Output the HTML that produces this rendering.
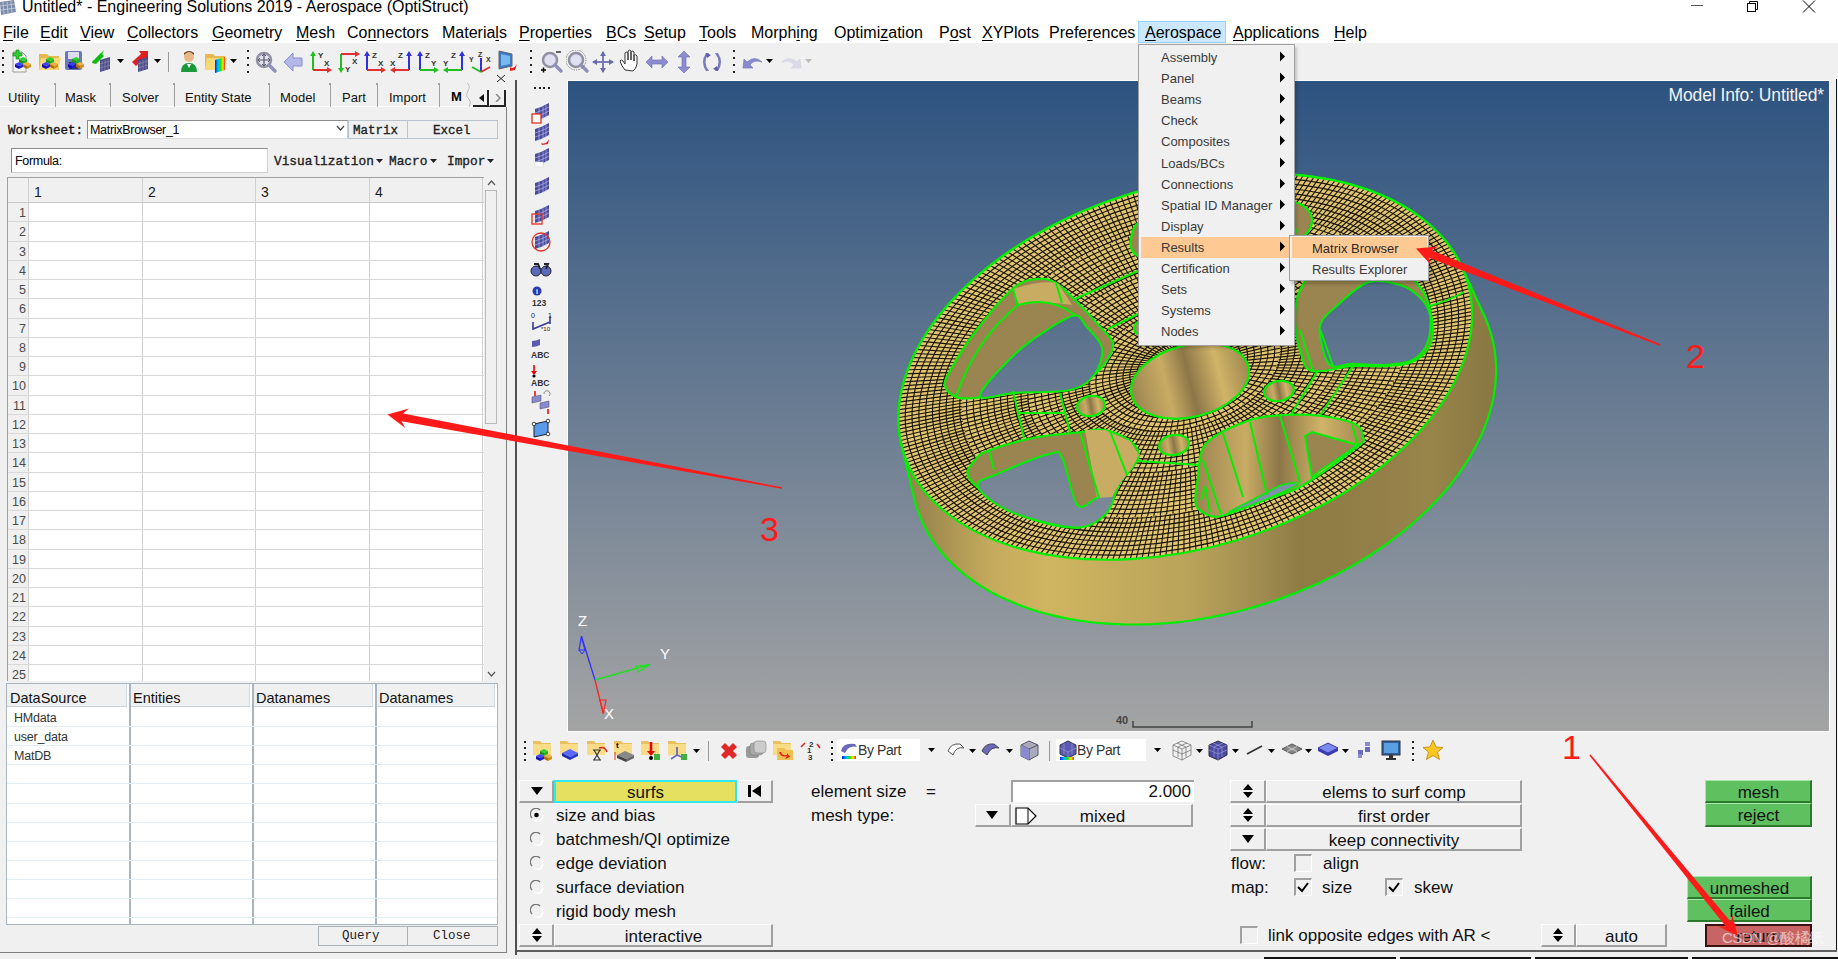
<!DOCTYPE html><html><head><meta charset="utf-8"><style>
*{margin:0;padding:0;box-sizing:border-box}
html,body{width:1838px;height:959px;overflow:hidden;background:#f0f0f0;font-family:"Liberation Sans",sans-serif;color:#000;position:relative}
.a{position:absolute}
.t{position:absolute;white-space:nowrap}
.mono{font-family:"Liberation Mono",monospace}
</style></head><body><div class="a" style="left:0;top:0;width:1838px;height:43px;background:#fff"></div>
<svg class="a" style="left:0;top:0" width="18" height="16"><path d="M0 2 L14 0 L16 12 L1 15 Z" fill="#7a8aa8"/><path d="M3 2 L4 14 M7 1.5 L8 13.5 M11 1 L12 13 M0.5 6 L15 4 M1 10 L15.5 8" stroke="#c8d0e0" stroke-width="0.8"/></svg>
<div class="t" style="left:22px;top:-3px;font-size:16px;line-height:20px;color:#000">Untitled* - Engineering Solutions 2019 - Aerospace (OptiStruct)</div>
<div class="a" style="left:1691px;top:5px;width:12px;height:1px;background:#555"></div>
<svg class="a" style="left:1745px;top:0" width="16" height="14"><rect x="2.5" y="3.5" width="8" height="8" fill="#fff" stroke="#000"/><path d="M4.5 3.5 V1.5 H12.5 V9.5 H10.5" fill="none" stroke="#000"/></svg>
<svg class="a" style="left:1801px;top:0" width="16" height="14"><path d="M2 0.5 L14 12.5 M14 0.5 L2 12.5" stroke="#000" stroke-width="1"/></svg>
<div class="a" style="left:1138px;top:21px;width:88px;height:22px;background:#cce8ff;border:1px solid #99d1ff"></div>
<div class="t" style="left:3px;top:23px;font-size:16px;line-height:20px"><u style="text-decoration:underline;text-underline-offset:2px">F</u>ile</div>
<div class="t" style="left:40px;top:23px;font-size:16px;line-height:20px"><u style="text-decoration:underline;text-underline-offset:2px">E</u>dit</div>
<div class="t" style="left:80px;top:23px;font-size:16px;line-height:20px"><u style="text-decoration:underline;text-underline-offset:2px">V</u>iew</div>
<div class="t" style="left:127px;top:23px;font-size:16px;line-height:20px"><u style="text-decoration:underline;text-underline-offset:2px">C</u>ollectors</div>
<div class="t" style="left:212px;top:23px;font-size:16px;line-height:20px"><u style="text-decoration:underline;text-underline-offset:2px">G</u>eometry</div>
<div class="t" style="left:296px;top:23px;font-size:16px;line-height:20px"><u style="text-decoration:underline;text-underline-offset:2px">M</u>esh</div>
<div class="t" style="left:347px;top:23px;font-size:16px;line-height:20px">Co<u style="text-decoration:underline;text-underline-offset:2px">n</u>nectors</div>
<div class="t" style="left:442px;top:23px;font-size:16px;line-height:20px">Materia<u style="text-decoration:underline;text-underline-offset:2px">l</u>s</div>
<div class="t" style="left:519px;top:23px;font-size:16px;line-height:20px"><u style="text-decoration:underline;text-underline-offset:2px">P</u>roperties</div>
<div class="t" style="left:606px;top:23px;font-size:16px;line-height:20px"><u style="text-decoration:underline;text-underline-offset:2px">B</u>Cs</div>
<div class="t" style="left:644px;top:23px;font-size:16px;line-height:20px"><u style="text-decoration:underline;text-underline-offset:2px">S</u>etup</div>
<div class="t" style="left:699px;top:23px;font-size:16px;line-height:20px"><u style="text-decoration:underline;text-underline-offset:2px">T</u>ools</div>
<div class="t" style="left:751px;top:23px;font-size:16px;line-height:20px">Morph<u style="text-decoration:underline;text-underline-offset:2px">i</u>ng</div>
<div class="t" style="left:834px;top:23px;font-size:16px;line-height:20px">Optimi<u style="text-decoration:underline;text-underline-offset:2px">z</u>ation</div>
<div class="t" style="left:939px;top:23px;font-size:16px;line-height:20px">P<u style="text-decoration:underline;text-underline-offset:2px">o</u>st</div>
<div class="t" style="left:982px;top:23px;font-size:16px;line-height:20px"><u style="text-decoration:underline;text-underline-offset:2px">X</u>YPlots</div>
<div class="t" style="left:1049px;top:23px;font-size:16px;line-height:20px">Prefe<u style="text-decoration:underline;text-underline-offset:2px">r</u>ences</div>
<div class="t" style="left:1145px;top:23px;font-size:16px;line-height:20px"><u style="text-decoration:underline;text-underline-offset:2px">A</u>erospace</div>
<div class="t" style="left:1233px;top:23px;font-size:16px;line-height:20px"><u style="text-decoration:underline;text-underline-offset:2px">A</u>pplications</div>
<div class="t" style="left:1334px;top:23px;font-size:16px;line-height:20px"><u style="text-decoration:underline;text-underline-offset:2px">H</u>elp</div>
<div class="a" style="left:2px;top:50px;width:2px;height:2px;background:#222"></div>
<div class="a" style="left:2px;top:57px;width:2px;height:2px;background:#222"></div>
<div class="a" style="left:2px;top:64px;width:2px;height:2px;background:#222"></div>
<div class="a" style="left:2px;top:71px;width:2px;height:2px;background:#222"></div>
<svg class="a" style="left:10px;top:48px" width="24" height="26" viewBox="0 0 24 26"><path d="M3 4 h9 l4 4 v16 h-13z" fill="#f4f4f4" stroke="#999"/><path d="M6 2 h3 v3 h3 v3 h-3 v3 h-3 v-3 h-3 v-3 h3z" fill="#3c3" stroke="#080" stroke-width=".6"/><path d="M9 11 l4-2 4 2 -4 2z" fill="#2fd02f"/><path d="M9 11 v3 l4 2 v-3z" fill="#1a901a"/><path d="M17 11 v3 l-4 2 v-3z" fill="#22b022"/><path d="M5 16 l4-2 4 2 -4 2z" fill="#4040ff"/><path d="M5 16 v3 l4 2 v-3z" fill="#1010b0"/><path d="M13 16 v3 l-4 2 v-3z" fill="#2020d0"/><path d="M13 16 l4-2 4 2 -4 2z" fill="#f0b040"/><path d="M13 16 v3 l4 2 v-3z" fill="#b07010"/><path d="M21 16 v3 l-4 2 v-3z" fill="#d09020"/></svg>
<svg class="a" style="left:37px;top:48px" width="26" height="26" viewBox="0 0 26 26"><path d="M2 6 h8 l2 2 h10 v14 h-20z" fill="#e8b850"/><path d="M4 10 h20 l-3 12 h-19z" fill="#f8d878"/><path d="M9 11 l4-2 4 2 -4 2z" fill="#2fd02f"/><path d="M9 11 v3 l4 2 v-3z" fill="#1a901a"/><path d="M17 11 v3 l-4 2 v-3z" fill="#22b022"/><path d="M5 16 l4-2 4 2 -4 2z" fill="#4040ff"/><path d="M5 16 v3 l4 2 v-3z" fill="#1010b0"/><path d="M13 16 v3 l-4 2 v-3z" fill="#2020d0"/><path d="M13 16 l4-2 4 2 -4 2z" fill="#f0b040"/><path d="M13 16 v3 l4 2 v-3z" fill="#b07010"/><path d="M21 16 v3 l-4 2 v-3z" fill="#d09020"/></svg>
<svg class="a" style="left:63px;top:48px" width="26" height="26" viewBox="0 0 26 26"><rect x="2" y="3" width="17" height="19" rx="2" fill="#6a78b8"/><rect x="5" y="4" width="11" height="7" fill="#dde"/><rect x="6" y="14" width="9" height="7" fill="#334"/><path d="M9 11 l4-2 4 2 -4 2z" fill="#2fd02f"/><path d="M9 11 v3 l4 2 v-3z" fill="#1a901a"/><path d="M17 11 v3 l-4 2 v-3z" fill="#22b022"/><path d="M5 16 l4-2 4 2 -4 2z" fill="#4040ff"/><path d="M5 16 v3 l4 2 v-3z" fill="#1010b0"/><path d="M13 16 v3 l-4 2 v-3z" fill="#2020d0"/><path d="M13 16 l4-2 4 2 -4 2z" fill="#f0b040"/><path d="M13 16 v3 l4 2 v-3z" fill="#b07010"/><path d="M21 16 v3 l-4 2 v-3z" fill="#d09020"/></svg>
<svg class="a" style="left:90px;top:48px" width="26" height="26" viewBox="0 0 26 26"><path d="M14 2 l-9 9 h4 v-1 l3-3z" fill="#2c2"/><path d="M3 13 l8-8 3 3 -8 8z" fill="#1b1"/><path d="M2 15 l4 1 -3-4z" fill="#1a1"/><path d="M10 12 l10-3 v12 l-10 3z" fill="#4a4a90"/><path d="M12 13 v10 M15 12 v10 M18 11 v10 M10 16 l10-3 M10 20 l10-3" stroke="#99a" stroke-width=".6"/></svg>
<svg class="a" style="left:117px;top:59px" width="7" height="4" viewBox="0 0 7 4"><path d="M0 0 H7 L3.5 4 Z" fill="#000"/></svg>
<svg class="a" style="left:128px;top:48px" width="26" height="26" viewBox="0 0 26 26"><path d="M4 14 l9-8 -2-3 h9 v9 l-3-2 -9 8z" fill="#e02020"/><path d="M10 12 l10-3 v12 l-10 3z" fill="#4a4a90"/><path d="M12 13 v10 M15 12 v10 M18 11 v10 M10 16 l10-3 M10 20 l10-3" stroke="#99a" stroke-width=".6"/></svg>
<svg class="a" style="left:154px;top:59px" width="7" height="4" viewBox="0 0 7 4"><path d="M0 0 H7 L3.5 4 Z" fill="#000"/></svg>
<div class="a" style="left:168px;top:52px;width:1px;height:20px;background:#999"></div>
<svg class="a" style="left:178px;top:48px" width="22" height="26" viewBox="0 0 22 26"><circle cx="11" cy="9" r="5" fill="#e8b888"/><path d="M6 7 q5-6 10 0 v-2 q-5-4 -10 0z" fill="#6b3a1a"/><path d="M3 24 q0-9 8-9 q8 0 8 9z" fill="#1a9a3a"/><path d="M9 16 l2 4 2-4z" fill="#fff"/></svg>
<svg class="a" style="left:203px;top:48px" width="26" height="26" viewBox="0 0 26 26"><path d="M2 6 h8 l2 2 h10 v14 h-20z" fill="#e8b850"/><path d="M4 10 h20 l-3 12 h-19z" fill="#f8d878"/><path d="M12 12 l10-3 v13 l-10 3z" fill="url(#rb)"/></svg>
<svg width="0" height="0" style="position:absolute"><defs><linearGradient id="rb" x1="0" x2="1"><stop offset="0" stop-color="#0020ff"/><stop offset=".3" stop-color="#00c0ff"/><stop offset=".55" stop-color="#20e020"/><stop offset=".8" stop-color="#ffe000"/><stop offset="1" stop-color="#ff2000"/></linearGradient></defs></svg>
<svg class="a" style="left:230px;top:59px" width="7" height="4" viewBox="0 0 7 4"><path d="M0 0 H7 L3.5 4 Z" fill="#000"/></svg>
<div class="a" style="left:247px;top:50px;width:2px;height:2px;background:#222"></div>
<div class="a" style="left:247px;top:57px;width:2px;height:2px;background:#222"></div>
<div class="a" style="left:247px;top:64px;width:2px;height:2px;background:#222"></div>
<div class="a" style="left:247px;top:71px;width:2px;height:2px;background:#222"></div>
<svg class="a" style="left:254px;top:50px" width="24" height="24" viewBox="0 0 24 24"><circle cx="10" cy="10" r="7" fill="#e0e0f0" stroke="#9090a0" stroke-width="2.5"/><path d="M15 15 l6 6" stroke="#9090b8" stroke-width="3.5" stroke-linecap="round"/><path d="M10 5 v10 M5 10 h10" stroke="#556" stroke-width="1.2"/><path d="M8 6 l2-2 2 2 M8 14 l2 2 2-2 M6 8 l-2 2 2 2 M14 8 l2 2 -2 2" fill="none" stroke="#556" stroke-width="1"/></svg>
<svg class="a" style="left:281px;top:50px" width="24" height="24" viewBox="0 0 24 24"><path d="M3 12 l9-9 v5 h9 v8 h-9 v5z" fill="#b4b8e8" stroke="#8a8ed0"/></svg>
<svg class="a" style="left:309px;top:50px" width="24" height="24" viewBox="0 0 24 24"><path d="M4 20 V4" stroke="#20c020" stroke-width="2"/><path d="M1 6 L4 1 L7 6z" fill="#20c020"/><path d="M4 20 H20" stroke="#e03030" stroke-width="2"/><path d="M18 17 L23 20 L18 23z" fill="#e03030"/><text x="9" y="8" font-size="8" font-weight="bold" fill="#333" font-family="Liberation Sans">Y</text><text x="15" y="16" font-size="8" font-weight="bold" fill="#333" font-family="Liberation Sans">X</text></svg>
<svg class="a" style="left:337px;top:50px" width="24" height="24" viewBox="0 0 24 24"><path d="M4 4 V20" stroke="#20c020" stroke-width="2"/><path d="M1 18 L4 23 L7 18z" fill="#20c020"/><path d="M4 4 H20" stroke="#e03030" stroke-width="2"/><path d="M18 1 L23 4 L18 7z" fill="#e03030"/><text x="15" y="14" font-size="8" font-weight="bold" fill="#333" font-family="Liberation Sans">X</text><text x="8" y="22" font-size="8" font-weight="bold" fill="#333" font-family="Liberation Sans">Y</text></svg>
<svg class="a" style="left:363px;top:50px" width="24" height="24" viewBox="0 0 24 24"><path d="M4 20 V4" stroke="#3030e0" stroke-width="2"/><path d="M1 6 L4 1 L7 6z" fill="#3030e0"/><path d="M4 20 H20" stroke="#e03030" stroke-width="2"/><path d="M18 17 L23 20 L18 23z" fill="#e03030"/><text x="9" y="8" font-size="8" font-weight="bold" fill="#333" font-family="Liberation Sans">Z</text><text x="15" y="16" font-size="8" font-weight="bold" fill="#333" font-family="Liberation Sans">X</text></svg>
<svg class="a" style="left:389px;top:50px;transform:scaleX(-1)" width="24" height="24"><path d="M4 20 V4" stroke="#3030e0" stroke-width="2"/><path d="M1 6 L4 1 L7 6z" fill="#3030e0"/><path d="M4 20 H20" stroke="#e03030" stroke-width="2"/><path d="M18 17 L23 20 L18 23z" fill="#e03030"/><text x="9" y="8" font-size="8" font-weight="bold" fill="#333" font-family="Liberation Sans"></text><text x="15" y="16" font-size="8" font-weight="bold" fill="#333" font-family="Liberation Sans"></text></svg>
<svg class="a" style="left:389px;top:50px" width="24" height="24" viewBox="0 0 24 24"><text x="1" y="16" font-size="8" font-weight="bold" fill="#333" font-family="Liberation Sans">X</text><text x="9" y="8" font-size="8" font-weight="bold" fill="#333" font-family="Liberation Sans">Z</text></svg>
<svg class="a" style="left:416px;top:50px" width="24" height="24" viewBox="0 0 24 24"><path d="M4 20 V4" stroke="#3030e0" stroke-width="2"/><path d="M1 6 L4 1 L7 6z" fill="#3030e0"/><path d="M4 20 H20" stroke="#20c020" stroke-width="2"/><path d="M18 17 L23 20 L18 23z" fill="#20c020"/><text x="9" y="8" font-size="8" font-weight="bold" fill="#333" font-family="Liberation Sans">Z</text><text x="15" y="16" font-size="8" font-weight="bold" fill="#333" font-family="Liberation Sans">Y</text></svg>
<svg class="a" style="left:442px;top:50px;transform:scaleX(-1)" width="24" height="24"><path d="M4 20 V4" stroke="#3030e0" stroke-width="2"/><path d="M1 6 L4 1 L7 6z" fill="#3030e0"/><path d="M4 20 H20" stroke="#20c020" stroke-width="2"/><path d="M18 17 L23 20 L18 23z" fill="#20c020"/><text x="9" y="8" font-size="8" font-weight="bold" fill="#333" font-family="Liberation Sans"></text><text x="15" y="16" font-size="8" font-weight="bold" fill="#333" font-family="Liberation Sans"></text></svg>
<svg class="a" style="left:442px;top:50px" width="24" height="24" viewBox="0 0 24 24"><text x="1" y="16" font-size="8" font-weight="bold" fill="#333" font-family="Liberation Sans">Y</text><text x="9" y="8" font-size="8" font-weight="bold" fill="#333" font-family="Liberation Sans">Z</text></svg>
<svg class="a" style="left:469px;top:50px" width="24" height="24" viewBox="0 0 24 24"><path d="M12 22 V8" stroke="#3030e0" stroke-width="2"/><path d="M12 22 L3 17" stroke="#20c020" stroke-width="2"/><path d="M12 22 L21 17" stroke="#e03030" stroke-width="2"/><text x="9" y="7" font-size="7" font-weight="bold" fill="#333">Z</text><text x="0" y="12" font-size="7" font-weight="bold" fill="#333">Y</text><text x="17" y="12" font-size="7" font-weight="bold" fill="#333">X</text></svg>
<svg class="a" style="left:496px;top:48px" width="24" height="26" viewBox="0 0 24 26"><path d="M3 3 l13 3 v12 l-13 3z" fill="#3a7ac8" stroke="#666"/><path d="M5 6 l9 2 v8 l-9 2z" fill="#7ab8f0"/><path d="M14 19 q3 3 7-3 l-2 6 -5 1z" fill="#e02020"/></svg>
<div class="a" style="left:530px;top:50px;width:2px;height:2px;background:#222"></div>
<div class="a" style="left:530px;top:57px;width:2px;height:2px;background:#222"></div>
<div class="a" style="left:530px;top:64px;width:2px;height:2px;background:#222"></div>
<div class="a" style="left:530px;top:71px;width:2px;height:2px;background:#222"></div>
<svg class="a" style="left:540px;top:50px" width="24" height="24" viewBox="0 0 24 24"><circle cx="10" cy="10" r="7" fill="#e0e0f0" stroke="#9090a0" stroke-width="2.5"/><path d="M15 15 l6 6" stroke="#9090b8" stroke-width="3.5" stroke-linecap="round"/><path d="M16 2 h5" stroke="#333" stroke-width="1.5"/><path d="M1 20 h5 M3.5 17.5 v5" stroke="#000" stroke-width="1.5"/></svg>
<svg class="a" style="left:566px;top:50px" width="24" height="24" viewBox="0 0 24 24"><circle cx="10" cy="10" r="7" fill="#e0e0f0" stroke="#9090a0" stroke-width="2.5"/><path d="M15 15 l6 6" stroke="#9090b8" stroke-width="3.5" stroke-linecap="round"/><circle cx="10" cy="10" r="10" fill="none" stroke="#555" stroke-dasharray="1.2 1.2" stroke-width=".8"/></svg>
<svg class="a" style="left:591px;top:50px" width="24" height="24" viewBox="0 0 24 24"><path d="M12 2 V22 M2 12 H22" stroke="#7a7ab8" stroke-width="2"/><path d="M12 1 l-3 5 h6z M12 23 l-3-5 h6z M1 12 l5-3 v6z M23 12 l-5-3 v6z" fill="#6a6aa8"/></svg>
<svg class="a" style="left:619px;top:49px" width="24" height="24" viewBox="0 0 24 24"><path d="M6 21 q-4-5 -5-9 q1-2 3 0 l2 3 V4 q2-2 3 0 V11 V2 q2-2 3 0 V11 V3 q2-2 3 0 V12 V6 q2-1 3 1 V15 q-1 5 -4 7z" fill="#fff" stroke="#333" stroke-width="1"/></svg>
<svg class="a" style="left:645px;top:50px" width="24" height="24" viewBox="0 0 24 24"><path d="M1 12 l6-6 v4 h10 v-4 l6 6 -6 6 v-4 h-10 v4z" fill="#8c8cd0" stroke="#6a6ab0" stroke-width=".6"/></svg>
<svg class="a" style="left:672px;top:50px" width="24" height="24" viewBox="0 0 24 24"><path d="M12 1 l6 6 h-4 v10 h4 l-6 6 -6-6 h4 v-10 h-4z" fill="#8c8cd0" stroke="#6a6ab0" stroke-width=".6"/></svg>
<svg class="a" style="left:700px;top:50px" width="24" height="24" viewBox="0 0 24 24"><path d="M9 3 q-7 9 0 18 l-3 0 q-6-9 0-18z" fill="#7a7ac0"/><path d="M15 3 q7 9 0 18 l3 0 q6-9 0-18z" fill="#7a7ac0"/><path d="M6 3 l5 2 -4 3z M18 21 l-5-2 4-3z" fill="#5a5aa0"/></svg>
<div class="a" style="left:733px;top:50px;width:2px;height:2px;background:#222"></div>
<div class="a" style="left:733px;top:57px;width:2px;height:2px;background:#222"></div>
<div class="a" style="left:733px;top:64px;width:2px;height:2px;background:#222"></div>
<div class="a" style="left:733px;top:71px;width:2px;height:2px;background:#222"></div>
<svg class="a" style="left:740px;top:50px" width="24" height="24" viewBox="0 0 24 24"><path d="M3 18 l1-9 3 3 q8-7 15 0 q-8-3 -12 3 l3 3z" fill="#8a8ad0" stroke="#6a6ab0" stroke-width=".6"/></svg>
<svg class="a" style="left:766px;top:59px" width="7" height="4" viewBox="0 0 7 4"><path d="M0 0 H7 L3.5 4 Z" fill="#000"/></svg>
<svg class="a" style="left:780px;top:50px" width="24" height="24" viewBox="0 0 24 24"><g transform="translate(24,0) scale(-1,1)"><path d="M3 18 l1-9 3 3 q8-7 15 0 q-8-3 -12 3 l3 3z" fill="#dcdce8" stroke="#d0d0e0" stroke-width=".6"/></g></svg>
<svg class="a" style="left:805px;top:59px" width="7" height="4" viewBox="0 0 7 4"><path d="M0 0 H7 L3.5 4 Z" fill="#bbb"/></svg>
<div class="a" style="left:0;top:106px;width:506px;height:1px;background:#fff"></div>
<div class="t" style="left:8px;top:90px;font-size:13px;line-height:16px;color:#111">Utility</div>
<div class="a" style="left:55px;top:83px;width:1px;height:24px;background:#a0a0a0"></div>
<div class="a" style="left:54px;top:83px;width:1px;height:2px;background:#a0a0a0"></div>
<div class="t" style="left:65px;top:90px;font-size:13px;line-height:16px;color:#111">Mask</div>
<div class="a" style="left:110px;top:83px;width:1px;height:24px;background:#a0a0a0"></div>
<div class="a" style="left:109px;top:83px;width:1px;height:2px;background:#a0a0a0"></div>
<div class="t" style="left:122px;top:90px;font-size:13px;line-height:16px;color:#111">Solver</div>
<div class="a" style="left:174px;top:83px;width:1px;height:24px;background:#a0a0a0"></div>
<div class="a" style="left:173px;top:83px;width:1px;height:2px;background:#a0a0a0"></div>
<div class="t" style="left:185px;top:90px;font-size:13px;line-height:16px;color:#111">Entity State</div>
<div class="a" style="left:269px;top:83px;width:1px;height:24px;background:#a0a0a0"></div>
<div class="a" style="left:268px;top:83px;width:1px;height:2px;background:#a0a0a0"></div>
<div class="t" style="left:280px;top:90px;font-size:13px;line-height:16px;color:#111">Model</div>
<div class="a" style="left:330px;top:83px;width:1px;height:24px;background:#a0a0a0"></div>
<div class="a" style="left:329px;top:83px;width:1px;height:2px;background:#a0a0a0"></div>
<div class="t" style="left:342px;top:90px;font-size:13px;line-height:16px;color:#111">Part</div>
<div class="a" style="left:377px;top:83px;width:1px;height:24px;background:#a0a0a0"></div>
<div class="a" style="left:376px;top:83px;width:1px;height:2px;background:#a0a0a0"></div>
<div class="t" style="left:389px;top:90px;font-size:13px;line-height:16px;color:#111">Import</div>
<div class="a" style="left:439px;top:83px;width:1px;height:24px;background:#a0a0a0"></div>
<div class="a" style="left:438px;top:83px;width:1px;height:2px;background:#a0a0a0"></div>
<div class="t" style="left:451px;top:89px;font-size:13px;line-height:16px;font-weight:bold">M</div>
<svg class="a" style="left:465px;top:82px" width="8" height="26" viewBox="0 0 8 26"><path d="M2 1 q4 3 1 8 q-3 5 1 8 q3 3 0 8" fill="none" stroke="#bbb"/></svg>
<div class="a" style="left:473px;top:90px;width:16px;height:17px;border-right:2px solid #222;border-bottom:2px solid #222;background:#f0f0f0"></div>
<div class="a" style="left:489px;top:90px;width:17px;height:17px;border-right:2px solid #222;border-bottom:2px solid #222;border-left:1px solid #fff;background:#f0f0f0"></div>
<svg class="a" style="left:479px;top:94px" width="6" height="8" viewBox="0 0 6 8"><path d="M5 0 V8 L0 4z" fill="#111"/></svg>
<svg class="a" style="left:495px;top:94px" width="6" height="8" viewBox="0 0 6 8"><path d="M1 0 L5 4 L1 8" fill="none" stroke="#888" stroke-width="1.5"/></svg>
<svg class="a" style="left:496px;top:74px" width="10" height="9" viewBox="0 0 10 9"><path d="M1 1 L9 8 M9 1 L1 8" stroke="#222" stroke-width="1"/></svg>
<div class="a" style="left:506px;top:107px;width:1px;height:846px;background:#808080"></div>
<div class="a" style="left:0px;top:952px;width:507px;height:1px;background:#808080"></div>
<div class="a" style="left:515px;top:80px;width:2px;height:875px;background:#505050"></div>
<div class="t mono" style="left:8px;top:122.5px;font-size:12.5px;line-height:16px;-webkit-text-stroke:0.35px #111;color:#111">Worksheet:</div>
<div class="a" style="left:87px;top:120px;width:261px;height:19px;background:#fff;border:1px solid #8c8c8c;border-right:1px solid #ccc;border-bottom:1px solid #ddd"></div>
<div class="t" style="left:90px;top:122px;font-size:12.5px;line-height:16px;letter-spacing:-0.3px">MatrixBrowser_1</div>
<svg class="a" style="left:336px;top:125px" width="9" height="7" viewBox="0 0 9 7"><path d="M1 1 L4.5 5 L8 1" fill="none" stroke="#444" stroke-width="1.2"/></svg>
<div class="a" style="left:348px;top:120px;width:60px;height:19px;background:#f0f0f0;border:1px solid #b8c4d0"></div>
<div class="a" style="left:407px;top:120px;width:91px;height:19px;background:#f0f0f0;border:1px solid #b8c4d0"></div>
<div class="t mono" style="left:353px;top:122.5px;font-size:12.5px;line-height:16px;-webkit-text-stroke:0.35px #222;color:#222">Matrix</div>
<div class="t mono" style="left:433px;top:122.5px;font-size:12.5px;line-height:16px;-webkit-text-stroke:0.35px #222;color:#222">Excel</div>
<div class="a" style="left:11px;top:148px;width:257px;height:25px;background:#fff;border:1px solid #8c8c8c;border-right-color:#d0d0d0;border-bottom-color:#d0d0d0"></div>
<div class="t" style="left:15px;top:153px;font-size:12.5px;line-height:16px;letter-spacing:-0.3px">Formula:</div>
<div class="t mono" style="left:274px;top:153.5px;font-size:12.8px;line-height:16px;-webkit-text-stroke:0.35px #222;color:#222">Visualization</div>
<div class="t mono" style="left:389px;top:153.5px;font-size:12.8px;line-height:16px;-webkit-text-stroke:0.35px #222;color:#222">Macro</div>
<div class="t mono" style="left:447px;top:153.5px;font-size:12.8px;line-height:16px;-webkit-text-stroke:0.35px #222;color:#222">Impor</div>
<svg class="a" style="left:376px;top:159px" width="7" height="4" viewBox="0 0 7 4"><path d="M0 0 H7 L3.5 4 Z" fill="#222"/></svg>
<svg class="a" style="left:430px;top:159px" width="7" height="4" viewBox="0 0 7 4"><path d="M0 0 H7 L3.5 4 Z" fill="#222"/></svg>
<svg class="a" style="left:487px;top:159px" width="7" height="4" viewBox="0 0 7 4"><path d="M0 0 H7 L3.5 4 Z" fill="#222"/></svg>
<div class="a" style="left:7px;top:177px;width:477px;height:504px;background:#fff;border-top:1px solid #a0a0a0;border-left:1px solid #a0a0a0"></div>
<div class="a" style="left:8px;top:178px;width:476px;height:24px;background:#f0f0f0"></div>
<div class="a" style="left:8px;top:202px;width:20px;height:479px;background:#f0f0f0"></div>
<div class="a" style="left:28px;top:178px;width:1px;height:503px;background:#d0d0d0"></div>
<div class="a" style="left:142px;top:178px;width:1px;height:503px;background:#d0d0d0"></div>
<div class="a" style="left:255px;top:178px;width:1px;height:503px;background:#d0d0d0"></div>
<div class="a" style="left:369px;top:178px;width:1px;height:503px;background:#d0d0d0"></div>
<div class="a" style="left:482px;top:178px;width:1px;height:503px;background:#d0d0d0"></div>
<div class="a" style="left:8px;top:202px;width:476px;height:1px;background:#c8c8c8"></div>
<div class="t" style="left:34px;top:184px;font-size:14px;line-height:16px;color:#1a1a1a">1</div>
<div class="t" style="left:148px;top:184px;font-size:14px;line-height:16px;color:#1a1a1a">2</div>
<div class="t" style="left:261px;top:184px;font-size:14px;line-height:16px;color:#1a1a1a">3</div>
<div class="t" style="left:375px;top:184px;font-size:14px;line-height:16px;color:#1a1a1a">4</div>
<div class="a" style="left:8px;top:221.25px;width:476px;height:1px;background:#d8d8d8"></div>
<div class="t" style="left:8px;width:18px;text-align:right;top:206.00px;font-size:12.5px;line-height:14px;color:#4a4a4a">1</div>
<div class="a" style="left:8px;top:240.50px;width:476px;height:1px;background:#d8d8d8"></div>
<div class="t" style="left:8px;width:18px;text-align:right;top:225.25px;font-size:12.5px;line-height:14px;color:#4a4a4a">2</div>
<div class="a" style="left:8px;top:259.75px;width:476px;height:1px;background:#d8d8d8"></div>
<div class="t" style="left:8px;width:18px;text-align:right;top:244.50px;font-size:12.5px;line-height:14px;color:#4a4a4a">3</div>
<div class="a" style="left:8px;top:279.00px;width:476px;height:1px;background:#d8d8d8"></div>
<div class="t" style="left:8px;width:18px;text-align:right;top:263.75px;font-size:12.5px;line-height:14px;color:#4a4a4a">4</div>
<div class="a" style="left:8px;top:298.25px;width:476px;height:1px;background:#d8d8d8"></div>
<div class="t" style="left:8px;width:18px;text-align:right;top:283.00px;font-size:12.5px;line-height:14px;color:#4a4a4a">5</div>
<div class="a" style="left:8px;top:317.50px;width:476px;height:1px;background:#d8d8d8"></div>
<div class="t" style="left:8px;width:18px;text-align:right;top:302.25px;font-size:12.5px;line-height:14px;color:#4a4a4a">6</div>
<div class="a" style="left:8px;top:336.75px;width:476px;height:1px;background:#d8d8d8"></div>
<div class="t" style="left:8px;width:18px;text-align:right;top:321.50px;font-size:12.5px;line-height:14px;color:#4a4a4a">7</div>
<div class="a" style="left:8px;top:356.00px;width:476px;height:1px;background:#d8d8d8"></div>
<div class="t" style="left:8px;width:18px;text-align:right;top:340.75px;font-size:12.5px;line-height:14px;color:#4a4a4a">8</div>
<div class="a" style="left:8px;top:375.25px;width:476px;height:1px;background:#d8d8d8"></div>
<div class="t" style="left:8px;width:18px;text-align:right;top:360.00px;font-size:12.5px;line-height:14px;color:#4a4a4a">9</div>
<div class="a" style="left:8px;top:394.50px;width:476px;height:1px;background:#d8d8d8"></div>
<div class="t" style="left:8px;width:18px;text-align:right;top:379.25px;font-size:12.5px;line-height:14px;color:#4a4a4a">10</div>
<div class="a" style="left:8px;top:413.75px;width:476px;height:1px;background:#d8d8d8"></div>
<div class="t" style="left:8px;width:18px;text-align:right;top:398.50px;font-size:12.5px;line-height:14px;color:#4a4a4a">11</div>
<div class="a" style="left:8px;top:433.00px;width:476px;height:1px;background:#d8d8d8"></div>
<div class="t" style="left:8px;width:18px;text-align:right;top:417.75px;font-size:12.5px;line-height:14px;color:#4a4a4a">12</div>
<div class="a" style="left:8px;top:452.25px;width:476px;height:1px;background:#d8d8d8"></div>
<div class="t" style="left:8px;width:18px;text-align:right;top:437.00px;font-size:12.5px;line-height:14px;color:#4a4a4a">13</div>
<div class="a" style="left:8px;top:471.50px;width:476px;height:1px;background:#d8d8d8"></div>
<div class="t" style="left:8px;width:18px;text-align:right;top:456.25px;font-size:12.5px;line-height:14px;color:#4a4a4a">14</div>
<div class="a" style="left:8px;top:490.75px;width:476px;height:1px;background:#d8d8d8"></div>
<div class="t" style="left:8px;width:18px;text-align:right;top:475.50px;font-size:12.5px;line-height:14px;color:#4a4a4a">15</div>
<div class="a" style="left:8px;top:510.00px;width:476px;height:1px;background:#d8d8d8"></div>
<div class="t" style="left:8px;width:18px;text-align:right;top:494.75px;font-size:12.5px;line-height:14px;color:#4a4a4a">16</div>
<div class="a" style="left:8px;top:529.25px;width:476px;height:1px;background:#d8d8d8"></div>
<div class="t" style="left:8px;width:18px;text-align:right;top:514.00px;font-size:12.5px;line-height:14px;color:#4a4a4a">17</div>
<div class="a" style="left:8px;top:548.50px;width:476px;height:1px;background:#d8d8d8"></div>
<div class="t" style="left:8px;width:18px;text-align:right;top:533.25px;font-size:12.5px;line-height:14px;color:#4a4a4a">18</div>
<div class="a" style="left:8px;top:567.75px;width:476px;height:1px;background:#d8d8d8"></div>
<div class="t" style="left:8px;width:18px;text-align:right;top:552.50px;font-size:12.5px;line-height:14px;color:#4a4a4a">19</div>
<div class="a" style="left:8px;top:587.00px;width:476px;height:1px;background:#d8d8d8"></div>
<div class="t" style="left:8px;width:18px;text-align:right;top:571.75px;font-size:12.5px;line-height:14px;color:#4a4a4a">20</div>
<div class="a" style="left:8px;top:606.25px;width:476px;height:1px;background:#d8d8d8"></div>
<div class="t" style="left:8px;width:18px;text-align:right;top:591.00px;font-size:12.5px;line-height:14px;color:#4a4a4a">21</div>
<div class="a" style="left:8px;top:625.50px;width:476px;height:1px;background:#d8d8d8"></div>
<div class="t" style="left:8px;width:18px;text-align:right;top:610.25px;font-size:12.5px;line-height:14px;color:#4a4a4a">22</div>
<div class="a" style="left:8px;top:644.75px;width:476px;height:1px;background:#d8d8d8"></div>
<div class="t" style="left:8px;width:18px;text-align:right;top:629.50px;font-size:12.5px;line-height:14px;color:#4a4a4a">23</div>
<div class="a" style="left:8px;top:664.00px;width:476px;height:1px;background:#d8d8d8"></div>
<div class="t" style="left:8px;width:18px;text-align:right;top:648.75px;font-size:12.5px;line-height:14px;color:#4a4a4a">24</div>
<div class="a" style="left:8px;top:683.25px;width:476px;height:1px;background:#d8d8d8"></div>
<div class="t" style="left:8px;width:18px;text-align:right;top:668.00px;font-size:12.5px;line-height:14px;color:#4a4a4a">25</div>
<div class="a" style="left:484px;top:177px;width:14px;height:504px;background:#f0f0f0"></div>
<div class="a" style="left:485px;top:190px;width:12px;height:234px;border:1px solid #b8b8b8;background:#f0f0f0"></div>
<svg class="a" style="left:487px;top:180px" width="9" height="6" viewBox="0 0 9 6"><path d="M1 5 L4.5 1 L8 5" fill="none" stroke="#555" stroke-width="1.2"/></svg>
<svg class="a" style="left:487px;top:671px" width="9" height="6" viewBox="0 0 9 6"><path d="M1 1 L4.5 5 L8 1" fill="none" stroke="#555" stroke-width="1.2"/></svg>
<div class="a" style="left:6px;top:683px;width:492px;height:242px;background:#fff;border:1px solid #a8b4c0"></div>
<div class="a" style="left:7px;top:684px;width:120px;height:23px;background:#f0f0f0;border-bottom:1px solid #c8d0d8;border-right:1px solid #d0d8e0"></div>
<div class="t" style="left:10px;top:689.5px;font-size:14.5px;line-height:17px;color:#111">DataSource</div>
<div class="a" style="left:130px;top:684px;width:120px;height:23px;background:#f0f0f0;border-bottom:1px solid #c8d0d8;border-right:1px solid #d0d8e0"></div>
<div class="t" style="left:133px;top:689.5px;font-size:14.5px;line-height:17px;color:#111">Entities</div>
<div class="a" style="left:253px;top:684px;width:120px;height:23px;background:#f0f0f0;border-bottom:1px solid #c8d0d8;border-right:1px solid #d0d8e0"></div>
<div class="t" style="left:256px;top:689.5px;font-size:14.5px;line-height:17px;color:#111">Datanames</div>
<div class="a" style="left:376px;top:684px;width:119px;height:23px;background:#f0f0f0;border-bottom:1px solid #c8d0d8;border-right:1px solid #d0d8e0"></div>
<div class="t" style="left:379px;top:689.5px;font-size:14.5px;line-height:17px;color:#111">Datanames</div>
<div class="a" style="left:129px;top:683px;width:2px;height:242px;background:#a8b4c0"></div>
<div class="a" style="left:252px;top:683px;width:2px;height:242px;background:#a8b4c0"></div>
<div class="a" style="left:375px;top:683px;width:2px;height:242px;background:#a8b4c0"></div>
<div class="a" style="left:7px;top:726.1px;width:490px;height:1px;background:#e2eef6"></div>
<div class="a" style="left:7px;top:745.2px;width:490px;height:1px;background:#e2eef6"></div>
<div class="a" style="left:7px;top:764.3px;width:490px;height:1px;background:#e2eef6"></div>
<div class="a" style="left:7px;top:783.4px;width:490px;height:1px;background:#e2eef6"></div>
<div class="a" style="left:7px;top:802.5px;width:490px;height:1px;background:#e2eef6"></div>
<div class="a" style="left:7px;top:821.6px;width:490px;height:1px;background:#e2eef6"></div>
<div class="a" style="left:7px;top:840.7px;width:490px;height:1px;background:#e2eef6"></div>
<div class="a" style="left:7px;top:859.8px;width:490px;height:1px;background:#e2eef6"></div>
<div class="a" style="left:7px;top:878.9px;width:490px;height:1px;background:#e2eef6"></div>
<div class="a" style="left:7px;top:898.0px;width:490px;height:1px;background:#e2eef6"></div>
<div class="a" style="left:7px;top:917.1px;width:490px;height:1px;background:#e2eef6"></div>
<div class="t" style="left:14px;top:711.0px;font-size:12.5px;line-height:14px;color:#333;letter-spacing:-0.2px">HMdata</div>
<div class="t" style="left:14px;top:730.1px;font-size:12.5px;line-height:14px;color:#333;letter-spacing:-0.2px">user_data</div>
<div class="t" style="left:14px;top:749.2px;font-size:12.5px;line-height:14px;color:#333;letter-spacing:-0.2px">MatDB</div>
<div class="a" style="left:318px;top:926px;width:90px;height:20px;background:#f0f0f0;border:1px solid #a8b0b8"></div>
<div class="a" style="left:407px;top:926px;width:91px;height:20px;background:#f0f0f0;border:1px solid #a8b0b8"></div>
<div class="t mono" style="left:342px;top:928px;font-size:12.5px;line-height:16px;color:#222">Query</div>
<div class="t mono" style="left:433px;top:928px;font-size:12.5px;line-height:16px;color:#222">Close</div>
<div class="a" style="left:567px;top:80px;width:1263px;height:652px;background:#fff"></div>
<div class="a" style="left:1836px;top:79px;width:1px;height:873px;background:#181818"></div>
<svg class="a" style="left:568px;top:81px" width="1261" height="650" viewBox="568 81 1261 650"><defs>
<linearGradient id="bg" gradientUnits="userSpaceOnUse" x1="0" y1="81" x2="0" y2="731"><stop offset="0" stop-color="#2d5380"/><stop offset="1" stop-color="#a4a4a4"/></linearGradient>
<linearGradient id="wall" gradientUnits="userSpaceOnUse" x1="900" y1="0" x2="1500" y2="0">
<stop offset="0" stop-color="#948050"/><stop offset=".053" stop-color="#a08c50"/><stop offset=".15" stop-color="#c4aa5c"/><stop offset=".25" stop-color="#cfb560"/><stop offset=".483" stop-color="#b9a35a"/><stop offset=".6" stop-color="#a08c50"/><stop offset=".667" stop-color="#8d7c44"/><stop offset=".8" stop-color="#947f48"/><stop offset=".883" stop-color="#97854a"/><stop offset=".97" stop-color="#8c7a44"/><stop offset="1" stop-color="#8a7844"/></linearGradient>
<linearGradient id="hw" gradientUnits="objectBoundingBox" x1="0" y1="0" x2="1" y2="0">
<stop offset="0" stop-color="#9c8450"/><stop offset=".3" stop-color="#c8ac64"/><stop offset=".5" stop-color="#8c7648"/><stop offset=".75" stop-color="#d0b468"/><stop offset="1" stop-color="#a08850"/></linearGradient>
<linearGradient id="dk" gradientUnits="objectBoundingBox" x1="0" y1="0" x2="1" y2="0">
<stop offset="0" stop-color="#a08a52"/><stop offset="1" stop-color="#94804c"/></linearGradient>
<pattern id="mesh" patternUnits="userSpaceOnUse" width="5.6" height="5.6" patternTransform="rotate(-20) skewX(-15)">
<rect width="5.6" height="5.6" fill="#e0c478"/><rect width="5.6" height="1.15" fill="#1e1a10"/><rect width="1.15" height="5.6" fill="#1e1a10"/></pattern>
</defs><rect x="568" y="81" width="1261" height="650" fill="url(#bg)"/><path d="M898.5 418.6 L898.5 413.7 L898.8 408.8 L899.3 403.9 L900.0 398.9 L900.9 393.9 L902.0 388.9 L903.2 383.8 L904.7 378.8 L906.4 373.7 L908.2 368.7 L910.2 363.6 L912.5 358.6 L914.9 353.5 L917.5 348.5 L920.2 343.4 L923.2 338.4 L926.4 333.4 L929.7 328.5 L933.2 323.5 L936.8 318.6 L940.7 313.7 L944.7 308.9 L948.8 304.1 L953.2 299.3 L957.7 294.6 L962.3 289.9 L967.1 285.3 L972.1 280.7 L977.2 276.2 L982.4 271.8 L987.8 267.4 L993.3 263.1 L998.9 258.8 L1004.7 254.7 L1010.6 250.6 L1016.6 246.6 L1022.7 242.7 L1029.0 238.8 L1035.3 235.1 L1041.8 231.4 L1048.3 227.8 L1055.0 224.4 L1061.7 221.0 L1068.5 217.7 L1075.4 214.5 L1082.4 211.5 L1089.5 208.5 L1096.6 205.6 L1103.7 202.9 L1111.0 200.2 L1118.2 197.7 L1125.6 195.3 L1132.9 193.0 L1140.3 190.9 L1147.8 188.8 L1155.2 186.9 L1162.7 185.1 L1170.2 183.4 L1177.7 181.8 L1185.2 180.4 L1192.7 179.1 L1200.2 177.9 L1207.7 176.9 L1215.2 176.0 L1222.6 175.2 L1230.1 174.6 L1237.5 174.0 L1244.8 173.7 L1252.2 173.4 L1259.4 173.3 L1266.7 173.3 L1273.8 173.4 L1281.0 173.7 L1288.0 174.1 L1295.0 174.6 L1301.9 175.3 L1308.7 176.1 L1315.4 177.0 L1322.1 178.1 L1328.6 179.3 L1335.1 180.6 L1341.4 182.1 L1347.7 183.6 L1353.8 185.3 L1359.8 187.2 L1365.7 189.1 L1371.5 191.2 L1377.2 193.3 L1382.7 195.7 L1388.1 198.1 L1393.3 200.6 L1398.4 203.3 L1403.4 206.0 L1408.2 208.9 L1412.8 211.9 L1417.3 215.0 L1421.6 218.2 L1425.8 221.5 L1429.8 224.8 L1433.7 228.3 L1437.3 231.9 L1440.8 235.6 L1444.2 239.4 L1447.3 243.2 L1450.3 247.1 L1453.1 251.2 L1455.7 255.3 L1458.1 259.4 L1460.3 263.7 L1462.3 268.0 L1485.4 318.3 L1487.3 323.0 L1489.1 327.8 L1490.7 332.6 L1492.0 337.5 L1493.2 342.5 L1494.2 347.5 L1495.0 352.6 L1495.5 357.7 L1495.9 362.9 L1496.1 368.0 L1496.1 373.3 L1495.8 378.5 L1495.4 383.8 L1494.8 389.1 L1493.9 394.5 L1492.9 399.8 L1491.7 405.2 L1490.3 410.5 L1488.6 415.9 L1486.8 421.3 L1484.8 426.7 L1482.6 432.0 L1480.2 437.4 L1477.6 442.7 L1474.9 448.1 L1471.9 453.4 L1468.8 458.7 L1465.4 463.9 L1461.9 469.2 L1458.3 474.4 L1454.4 479.5 L1450.4 484.7 L1446.2 489.7 L1441.8 494.8 L1437.3 499.7 L1432.6 504.6 L1427.8 509.5 L1422.8 514.3 L1417.6 519.0 L1412.3 523.7 L1406.9 528.3 L1401.3 532.8 L1395.6 537.2 L1389.8 541.6 L1383.8 545.9 L1377.7 550.1 L1371.5 554.2 L1365.1 558.2 L1358.7 562.1 L1352.2 565.9 L1345.5 569.6 L1338.8 573.2 L1331.9 576.7 L1325.0 580.1 L1318.0 583.4 L1310.9 586.6 L1303.7 589.6 L1296.5 592.6 L1289.2 595.4 L1281.8 598.1 L1274.4 600.7 L1267.0 603.1 L1259.5 605.4 L1251.9 607.6 L1244.4 609.7 L1236.8 611.7 L1229.1 613.5 L1221.5 615.1 L1213.9 616.7 L1206.2 618.1 L1198.5 619.3 L1190.9 620.5 L1183.2 621.5 L1175.6 622.3 L1168.0 623.0 L1160.4 623.6 L1152.8 624.1 L1145.3 624.3 L1137.8 624.5 L1130.3 624.5 L1123.0 624.4 L1115.6 624.1 L1108.3 623.7 L1101.1 623.2 L1094.0 622.5 L1086.9 621.6 L1079.9 620.7 L1073.0 619.6 L1066.2 618.3 L1059.5 616.9 L1052.9 615.4 L1046.3 613.8 L1039.9 612.0 L1033.6 610.1 L1027.4 608.0 L1021.4 605.9 L1015.4 603.6 L1009.6 601.1 L1004.0 598.6 L998.4 595.9 L993.0 593.1 L987.8 590.2 L982.7 587.1 L977.7 584.0 L972.9 580.7 L968.3 577.4 L963.8 573.9 L959.5 570.3 L955.3 566.6 L951.3 562.8 L947.5 558.9 L943.9 554.9 L940.4 550.8 L937.2 546.7 L934.1 542.4 L931.2 538.1 L928.4 533.6 L925.9 529.1 L923.6 524.6 L921.4 519.9 L919.5 515.2 L917.7 510.4 L916.1 505.6 L914.8 500.7 L902.0 447.1 L900.9 442.5 L900.0 437.8 L899.3 433.1 L898.9 428.3 L898.6 423.5 Z" fill="url(#wall)" stroke="#00f000" stroke-width="2.2"/><clipPath id="topclip"><ellipse cx="1185.3" cy="366.5" rx="294.6" ry="181.2" transform="rotate(-16.8 1185.3 366.5)"/></clipPath><g clip-path="url(#topclip)"><ellipse cx="1185.3" cy="366.5" rx="294.6" ry="181.2" transform="rotate(-16.8 1185.3 366.5)" fill="#e2c672"/><g fill="none" stroke="#1c160a" stroke-width="1.15" transform="rotate(-16.8 1185.3 366.5)"><ellipse cx="1185.3" cy="366.5" rx="294.60" ry="181.20"/><ellipse cx="1185.3" cy="366.5" rx="287.61" ry="176.90"/><ellipse cx="1185.3" cy="366.5" rx="280.62" ry="172.60"/><ellipse cx="1185.3" cy="366.5" rx="273.63" ry="168.30"/><ellipse cx="1185.3" cy="366.5" rx="266.64" ry="164.00"/><ellipse cx="1185.3" cy="366.5" rx="259.64" ry="159.70"/><ellipse cx="1185.3" cy="366.5" rx="252.65" ry="155.40"/><ellipse cx="1185.3" cy="366.5" rx="245.66" ry="151.10"/><ellipse cx="1185.3" cy="366.5" rx="238.67" ry="146.80"/><ellipse cx="1185.3" cy="366.5" rx="231.68" ry="142.50"/><ellipse cx="1185.3" cy="366.5" rx="224.69" ry="138.20"/><ellipse cx="1185.3" cy="366.5" rx="217.70" ry="133.90"/><ellipse cx="1185.3" cy="366.5" rx="210.71" ry="129.60"/><ellipse cx="1185.3" cy="366.5" rx="203.72" ry="125.30"/><ellipse cx="1185.3" cy="366.5" rx="196.73" ry="121.00"/><ellipse cx="1185.3" cy="366.5" rx="189.73" ry="116.70"/><ellipse cx="1185.3" cy="366.5" rx="182.74" ry="112.40"/><ellipse cx="1185.3" cy="366.5" rx="175.75" ry="108.10"/><ellipse cx="1185.3" cy="366.5" rx="168.76" ry="103.80"/><ellipse cx="1185.3" cy="366.5" rx="161.77" ry="99.50"/><ellipse cx="1185.3" cy="366.5" rx="154.78" ry="95.20"/><ellipse cx="1185.3" cy="366.5" rx="147.79" ry="90.90"/><ellipse cx="1185.3" cy="366.5" rx="140.80" ry="86.60"/><ellipse cx="1185.3" cy="366.5" rx="133.81" ry="82.30"/><ellipse cx="1185.3" cy="366.5" rx="126.81" ry="78.00"/><ellipse cx="1185.3" cy="366.5" rx="119.82" ry="73.70"/><ellipse cx="1185.3" cy="366.5" rx="112.83" ry="69.40"/><ellipse cx="1185.3" cy="366.5" rx="105.84" ry="65.10"/><ellipse cx="1185.3" cy="366.5" rx="98.85" ry="60.80"/><ellipse cx="1185.3" cy="366.5" rx="91.86" ry="56.50"/><ellipse cx="1185.3" cy="366.5" rx="84.87" ry="52.20"/><ellipse cx="1185.3" cy="366.5" rx="77.88" ry="47.90"/><ellipse cx="1185.3" cy="366.5" rx="70.89" ry="43.60"/><ellipse cx="1185.3" cy="366.5" rx="63.90" ry="39.30"/><ellipse cx="1185.3" cy="366.5" rx="56.90" ry="35.00"/><ellipse cx="1185.3" cy="366.5" rx="49.91" ry="30.70"/><ellipse cx="1185.3" cy="366.5" rx="42.92" ry="26.40"/><ellipse cx="1185.3" cy="366.5" rx="35.93" ry="22.10"/><ellipse cx="1185.3" cy="366.5" rx="28.94" ry="17.80"/></g><path d="M1405.3 300.1L1473.0 279.6M1406.1 302.9L1474.0 283.4M1406.8 305.8L1475.0 287.1M1407.4 308.7L1475.8 290.9M1407.9 311.6L1476.4 294.8M1408.3 314.6L1477.0 298.6M1408.7 317.6L1477.4 302.5M1408.9 320.6L1477.7 306.4M1409.0 323.6L1477.8 310.4M1409.0 326.6L1477.9 314.3M1409.0 329.7L1477.8 318.3M1408.8 332.7L1477.6 322.3M1408.5 335.8L1477.2 326.4M1408.2 338.9L1476.7 330.4M1407.7 342.0L1476.1 334.5M1407.1 345.1L1475.4 338.6M1406.5 348.3L1474.5 342.7M1405.7 351.4L1473.5 346.8M1404.9 354.6L1472.4 350.9M1403.9 357.7L1471.2 355.0M1402.9 360.9L1469.8 359.1M1401.7 364.0L1468.3 363.2M1400.5 367.2L1466.7 367.4M1399.2 370.3L1465.0 371.5M1397.8 373.5L1463.1 375.6M1396.2 376.6L1461.1 379.8M1394.6 379.8L1459.0 383.9M1392.9 382.9L1456.8 388.0M1391.1 386.1L1454.5 392.1M1389.3 389.2L1452.0 396.2M1387.3 392.3L1449.4 400.2M1385.2 395.4L1446.7 404.3M1383.1 398.5L1443.9 408.3M1380.8 401.6L1441.0 412.4M1378.5 404.6L1438.0 416.4M1376.1 407.7L1434.8 420.3M1373.6 410.7L1431.6 424.3M1371.1 413.7L1428.2 428.2M1368.4 416.7L1424.7 432.1M1365.7 419.7L1421.2 436.0M1362.9 422.6L1417.5 439.9M1360.0 425.5L1413.7 443.7M1357.0 428.4L1409.8 447.5M1354.0 431.3L1405.8 451.2M1350.8 434.1L1401.8 454.9M1347.7 436.9L1397.6 458.6M1344.4 439.7L1393.3 462.2M1341.1 442.4L1389.0 465.8M1337.7 445.2L1384.5 469.4M1334.2 447.8L1380.0 472.9M1330.7 450.5L1375.4 476.3M1327.1 453.1L1370.7 479.7M1323.4 455.6L1365.9 483.1M1319.7 458.2L1361.1 486.4M1315.9 460.6L1356.1 489.6M1312.1 463.1L1351.1 492.8M1308.2 465.5L1346.0 496.0M1304.3 467.9L1340.9 499.0M1300.3 470.2L1335.6 502.1M1296.2 472.4L1330.4 505.0M1292.1 474.7L1325.0 507.9M1288.0 476.8L1319.6 510.8M1283.8 479.0L1314.1 513.6M1279.6 481.0L1308.6 516.3M1275.3 483.1L1303.0 518.9M1271.0 485.0L1297.4 521.5M1266.6 487.0L1291.7 524.0M1262.3 488.8L1285.9 526.5M1257.8 490.6L1280.2 528.8M1253.4 492.4L1274.4 531.2M1248.9 494.1L1268.5 533.4M1244.4 495.8L1262.6 535.5M1239.9 497.4L1256.7 537.6M1235.3 498.9L1250.7 539.6M1230.7 500.4L1244.7 541.6M1226.2 501.8L1238.7 543.4M1221.5 503.2L1232.7 545.2M1216.9 504.5L1226.6 546.9M1212.3 505.7L1220.6 548.5M1207.6 506.9L1214.5 550.1M1202.9 508.0L1208.4 551.5M1198.3 509.1L1202.2 552.9M1193.6 510.1L1196.1 554.2M1188.9 511.0L1190.0 555.4M1184.2 511.9L1183.9 556.6M1179.5 512.7L1177.7 557.6M1174.8 513.4L1171.6 558.6M1170.2 514.1L1165.5 559.5M1165.5 514.7L1159.4 560.3M1160.8 515.2L1153.3 561.0M1156.2 515.7L1147.2 561.6M1151.5 516.1L1141.1 562.2M1146.9 516.5L1135.1 562.6M1142.3 516.8L1129.1 563.0M1137.7 517.0L1123.1 563.3M1133.1 517.1L1117.1 563.5M1128.6 517.2L1111.2 563.6M1124.1 517.2L1105.2 563.6M1119.6 517.2L1099.4 563.5M1115.1 517.1L1093.5 563.4M1110.7 516.9L1087.7 563.2M1106.3 516.6L1082.0 562.8M1101.9 516.3L1076.3 562.4M1097.6 516.0L1070.6 561.9M1093.3 515.5L1065.0 561.4M1089.0 515.0L1059.4 560.7M1084.8 514.4L1053.9 559.9M1080.7 513.8L1048.5 559.1M1076.6 513.1L1043.1 558.2M1072.5 512.3L1037.8 557.2M1068.5 511.5L1032.5 556.1M1064.5 510.6L1027.3 554.9M1060.6 509.6L1022.2 553.7M1056.7 508.6L1017.1 552.3M1052.9 507.5L1012.2 550.9M1049.2 506.4L1007.3 549.4M1045.5 505.2L1002.4 547.9M1041.8 503.9L997.7 546.2M1038.3 502.6L993.0 544.5M1034.8 501.2L988.5 542.7M1031.3 499.8L984.0 540.8M1028.0 498.3L979.6 538.8M1024.7 496.7L975.3 536.8M1021.5 495.1L971.0 534.6M1018.3 493.4L966.9 532.4M1015.2 491.7L962.9 530.2M1012.2 489.9L959.0 527.8M1009.3 488.0L955.1 525.4M1006.4 486.2L951.4 523.0M1003.6 484.2L947.8 520.4M1001.0 482.2L944.2 517.8M998.3 480.2L940.8 515.1M995.8 478.1L937.5 512.4M993.4 475.9L934.3 509.6M991.0 473.7L931.2 506.7M988.7 471.5L928.2 503.8M986.5 469.2L925.4 500.8M984.4 466.9L922.6 497.7M982.4 464.5L920.0 494.6M980.5 462.1L917.4 491.5M978.6 459.6L915.0 488.2M976.9 457.1L912.7 485.0M975.2 454.6L910.6 481.6M973.6 452.0L908.5 478.3M972.2 449.4L906.6 474.8M970.8 446.7L904.8 471.4M969.5 444.0L903.1 467.9M968.3 441.3L901.6 464.3M967.2 438.5L900.1 460.7M966.2 435.7L898.8 457.0M965.3 432.9L897.6 453.4M964.5 430.1L896.6 449.6M963.8 427.2L895.6 445.9M963.2 424.3L894.8 442.1M962.7 421.4L894.2 438.2M962.3 418.4L893.6 434.4M961.9 415.4L893.2 430.5M961.7 412.4L892.9 426.6M961.6 409.4L892.8 422.6M961.6 406.4L892.7 418.7M961.6 403.3L892.8 414.7M961.8 400.3L893.0 410.7M962.1 397.2L893.4 406.6M962.4 394.1L893.9 402.6M962.9 391.0L894.5 398.5M963.5 387.9L895.2 394.4M964.1 384.7L896.1 390.3M964.9 381.6L897.1 386.2M965.7 378.4L898.2 382.1M966.7 375.3L899.4 378.0M967.7 372.1L900.8 373.9M968.9 369.0L902.3 369.8M970.1 365.8L903.9 365.6M971.4 362.7L905.6 361.5M972.8 359.5L907.5 357.4M974.4 356.4L909.5 353.2M976.0 353.2L911.6 349.1M977.7 350.1L913.8 345.0M979.5 346.9L916.1 340.9M981.3 343.8L918.6 336.8M983.3 340.7L921.2 332.8M985.4 337.6L923.9 328.7M987.5 334.5L926.7 324.7M989.8 331.4L929.6 320.6M992.1 328.4L932.6 316.6M994.5 325.3L935.8 312.7M997.0 322.3L939.0 308.7M999.5 319.3L942.4 304.8M1002.2 316.3L945.9 300.9M1004.9 313.3L949.4 297.0M1007.7 310.4L953.1 293.1M1010.6 307.5L956.9 289.3M1013.6 304.6L960.8 285.5M1016.6 301.7L964.8 281.8M1019.8 298.9L968.8 278.1M1022.9 296.1L973.0 274.4M1026.2 293.3L977.3 270.8M1029.5 290.6L981.6 267.2M1032.9 287.8L986.1 263.6M1036.4 285.2L990.6 260.1M1039.9 282.5L995.2 256.7M1043.5 279.9L999.9 253.3M1047.2 277.4L1004.7 249.9M1050.9 274.8L1009.5 246.6M1054.7 272.4L1014.5 243.4M1058.5 269.9L1019.5 240.2M1062.4 267.5L1024.6 237.0M1066.3 265.1L1029.7 234.0M1070.3 262.8L1035.0 230.9M1074.4 260.6L1040.2 228.0M1078.5 258.3L1045.6 225.1M1082.6 256.2L1051.0 222.2M1086.8 254.0L1056.5 219.4M1091.0 252.0L1062.0 216.7M1095.3 249.9L1067.6 214.1M1099.6 248.0L1073.2 211.5M1104.0 246.0L1078.9 209.0M1108.3 244.2L1084.7 206.5M1112.8 242.4L1090.4 204.2M1117.2 240.6L1096.2 201.8M1121.7 238.9L1102.1 199.6M1126.2 237.2L1108.0 197.5M1130.7 235.6L1113.9 195.4M1135.3 234.1L1119.9 193.4M1139.9 232.6L1125.9 191.4M1144.4 231.2L1131.9 189.6M1149.1 229.8L1137.9 187.8M1153.7 228.5L1144.0 186.1M1158.3 227.3L1150.0 184.5M1163.0 226.1L1156.1 182.9M1167.7 225.0L1162.2 181.5M1172.3 223.9L1168.4 180.1M1177.0 222.9L1174.5 178.8M1181.7 222.0L1180.6 177.6M1186.4 221.1L1186.7 176.4M1191.1 220.3L1192.9 175.4M1195.8 219.6L1199.0 174.4M1200.4 218.9L1205.1 173.5M1205.1 218.3L1211.2 172.7M1209.8 217.8L1217.3 172.0M1214.4 217.3L1223.4 171.4M1219.1 216.9L1229.5 170.8M1223.7 216.5L1235.5 170.4M1228.3 216.2L1241.5 170.0M1232.9 216.0L1247.5 169.7M1237.5 215.9L1253.5 169.5M1242.0 215.8L1259.4 169.4M1246.5 215.8L1265.4 169.4M1251.0 215.8L1271.2 169.5M1255.5 215.9L1277.1 169.6M1259.9 216.1L1282.9 169.8M1264.3 216.4L1288.6 170.2M1268.7 216.7L1294.3 170.6M1273.0 217.0L1300.0 171.1M1277.3 217.5L1305.6 171.6M1281.6 218.0L1311.2 172.3M1285.8 218.6L1316.7 173.1M1289.9 219.2L1322.1 173.9M1294.0 219.9L1327.5 174.8M1298.1 220.7L1332.8 175.8M1302.1 221.5L1338.1 176.9M1306.1 222.4L1343.3 178.1M1310.0 223.4L1348.4 179.3M1313.9 224.4L1353.5 180.7M1317.7 225.5L1358.4 182.1M1321.4 226.6L1363.3 183.6M1325.1 227.8L1368.2 185.1M1328.8 229.1L1372.9 186.8M1332.3 230.4L1377.6 188.5M1335.8 231.8L1382.1 190.3M1339.3 233.2L1386.6 192.2M1342.6 234.7L1391.0 194.2M1345.9 236.3L1395.3 196.2M1349.1 237.9L1399.6 198.4M1352.3 239.6L1403.7 200.6M1355.4 241.3L1407.7 202.8M1358.4 243.1L1411.6 205.2M1361.3 245.0L1415.5 207.6M1364.2 246.8L1419.2 210.0M1367.0 248.8L1422.8 212.6M1369.6 250.8L1426.4 215.2M1372.3 252.8L1429.8 217.9M1374.8 254.9L1433.1 220.6M1377.2 257.1L1436.3 223.4M1379.6 259.3L1439.4 226.3M1381.9 261.5L1442.4 229.2M1384.1 263.8L1445.2 232.2M1386.2 266.1L1448.0 235.3M1388.2 268.5L1450.6 238.4M1390.1 270.9L1453.2 241.5M1392.0 273.4L1455.6 244.8M1393.7 275.9L1457.9 248.0M1395.4 278.4L1460.0 251.4M1397.0 281.0L1462.1 254.7M1398.4 283.6L1464.0 258.2M1399.8 286.3L1465.8 261.6M1401.1 289.0L1467.5 265.1M1402.3 291.7L1469.0 268.7M1403.4 294.5L1470.5 272.3M1404.4 297.3L1471.8 276.0M1340.7 320.7L1405.7 301.5M1341.4 323.4L1406.7 305.4M1342.0 326.2L1407.5 309.4M1342.5 329.1L1408.2 313.4M1342.8 331.9L1408.7 317.4M1343.0 334.8L1408.9 321.5M1343.1 337.7L1409.0 325.7M1343.0 340.6L1409.0 329.8M1342.8 343.6L1408.7 334.0M1342.5 346.6L1408.3 338.2M1342.1 349.6L1407.6 342.5M1341.5 352.6L1406.8 346.7M1340.8 355.6L1405.8 351.0M1340.0 358.6L1404.7 355.3M1339.0 361.6L1403.3 359.6M1338.0 364.7L1401.8 363.9M1336.8 367.7L1400.1 368.2M1335.4 370.7L1398.2 372.5M1334.0 373.8L1396.2 376.8M1332.4 376.8L1393.9 381.1M1330.7 379.8L1391.5 385.4M1328.9 382.8L1389.0 389.6M1327.0 385.8L1386.3 393.9M1325.0 388.8L1383.4 398.1M1322.8 391.7L1380.3 402.3M1320.5 394.7L1377.1 406.4M1318.2 397.6L1373.7 410.6M1315.7 400.5L1370.2 414.7M1313.1 403.3L1366.5 418.7M1310.4 406.2L1362.7 422.8M1307.6 409.0L1358.7 426.7M1304.7 411.7L1354.6 430.6M1301.7 414.5L1350.4 434.5M1298.6 417.1L1346.0 438.3M1295.4 419.8L1341.5 442.1M1292.2 422.4L1336.9 445.8M1288.8 425.0L1332.1 449.4M1285.4 427.5L1327.2 453.0M1281.8 429.9L1322.2 456.5M1278.2 432.3L1317.1 459.9M1274.6 434.7L1311.9 463.2M1270.8 437.0L1306.6 466.5M1267.0 439.2L1301.2 469.7M1263.1 441.4L1295.6 472.8M1259.2 443.5L1290.0 475.8M1255.1 445.6L1284.4 478.7M1251.1 447.6L1278.6 481.5M1247.0 449.5L1272.7 484.2M1242.8 451.4L1266.8 486.9M1238.6 453.2L1260.8 489.4M1234.3 454.9L1254.8 491.9M1230.0 456.5L1248.7 494.2M1225.7 458.1L1242.5 496.4M1221.3 459.6L1236.3 498.6M1216.9 461.0L1230.1 500.6M1212.5 462.4L1223.8 502.5M1208.0 463.7L1217.5 504.3M1203.5 464.9L1211.2 506.0M1199.1 466.0L1204.8 507.6M1194.6 467.0L1198.4 509.0M1190.1 467.9L1192.1 510.4M1185.6 468.8L1185.7 511.6M1181.1 469.6L1179.3 512.7M1176.6 470.3L1172.9 513.7M1172.1 470.9L1166.5 514.5M1167.6 471.4L1160.2 515.3M1163.1 471.9L1153.8 515.9M1158.7 472.2L1147.5 516.4M1154.2 472.5L1141.2 516.8M1149.8 472.7L1135.0 517.1M1145.4 472.8L1128.8 517.2M1141.1 472.8L1122.6 517.2M1136.8 472.7L1116.5 517.1M1132.5 472.5L1110.5 516.9M1128.3 472.3L1104.5 516.5M1124.1 471.9L1098.6 516.0M1120.0 471.5L1092.7 515.4M1115.9 471.0L1086.9 514.7M1111.9 470.4L1081.2 513.9M1108.0 469.7L1075.6 512.9M1104.1 469.0L1070.1 511.8M1100.2 468.1L1064.7 510.6M1096.5 467.2L1059.3 509.3M1092.8 466.2L1054.1 507.9M1089.2 465.1L1049.0 506.3M1085.6 463.9L1044.0 504.7M1082.2 462.7L1039.1 502.9M1078.8 461.3L1034.3 501.0M1075.5 459.9L1029.6 499.0M1072.3 458.5L1025.1 496.9M1069.2 456.9L1020.7 494.7M1066.2 455.3L1016.5 492.4M1063.3 453.6L1012.3 490.0M1060.5 451.8L1008.3 487.4M1057.8 449.9L1004.5 484.8M1055.2 448.0L1000.8 482.1M1052.7 446.0L997.3 479.3M1050.3 444.0L993.9 476.4M1048.1 441.9L990.7 473.4M1045.9 439.7L987.6 470.3M1043.8 437.5L984.7 467.2M1041.9 435.2L981.9 463.9M1040.1 432.9L979.4 460.6M1038.4 430.5L976.9 457.2M1036.8 428.0L974.7 453.7M1035.3 425.5L972.6 450.2M1034.0 423.0L970.7 446.6M1032.8 420.4L969.0 442.9M1031.7 417.7L967.5 439.1M1030.7 415.0L966.1 435.3M1029.9 412.3L964.9 431.5M1029.2 409.6L963.9 427.6M1028.6 406.8L963.1 423.6M1028.1 403.9L962.4 419.6M1027.8 401.1L961.9 415.6M1027.6 398.2L961.7 411.5M1027.5 395.3L961.6 407.3M1027.6 392.4L961.6 403.2M1027.8 389.4L961.9 399.0M1028.1 386.4L962.3 394.8M1028.5 383.4L963.0 390.5M1029.1 380.4L963.8 386.3M1029.8 377.4L964.8 382.0M1030.6 374.4L965.9 377.7M1031.6 371.4L967.3 373.4M1032.6 368.3L968.8 369.1M1033.8 365.3L970.5 364.8M1035.2 362.3L972.4 360.5M1036.6 359.2L974.4 356.2M1038.2 356.2L976.7 351.9M1039.9 353.2L979.1 347.6M1041.7 350.2L981.6 343.4M1043.6 347.2L984.3 339.1M1045.6 344.2L987.2 334.9M1047.8 341.3L990.3 330.7M1050.1 338.3L993.5 326.6M1052.4 335.4L996.9 322.4M1054.9 332.5L1000.4 318.3M1057.5 329.7L1004.1 314.3M1060.2 326.8L1007.9 310.2M1063.0 324.0L1011.9 306.3M1065.9 321.3L1016.0 302.4M1068.9 318.5L1020.2 298.5M1072.0 315.9L1024.6 294.7M1075.2 313.2L1029.1 290.9M1078.4 310.6L1033.7 287.2M1081.8 308.0L1038.5 283.6M1085.2 305.5L1043.4 280.0M1088.8 303.1L1048.4 276.5M1092.4 300.7L1053.5 273.1M1096.0 298.3L1058.7 269.8M1099.8 296.0L1064.0 266.5M1103.6 293.8L1069.4 263.3M1107.5 291.6L1075.0 260.2M1111.4 289.5L1080.6 257.2M1115.5 287.4L1086.2 254.3M1119.5 285.4L1092.0 251.5M1123.6 283.5L1097.9 248.8M1127.8 281.6L1103.8 246.1M1132.0 279.8L1109.8 243.6M1136.3 278.1L1115.8 241.1M1140.6 276.5L1121.9 238.8M1144.9 274.9L1128.1 236.6M1149.3 273.4L1134.3 234.4M1153.7 272.0L1140.5 232.4M1158.1 270.6L1146.8 230.5M1162.6 269.3L1153.1 228.7M1167.1 268.1L1159.4 227.0M1171.5 267.0L1165.8 225.4M1176.0 266.0L1172.2 224.0M1180.5 265.1L1178.5 222.6M1185.0 264.2L1184.9 221.4M1189.5 263.4L1191.3 220.3M1194.0 262.7L1197.7 219.3M1198.5 262.1L1204.1 218.5M1203.0 261.6L1210.4 217.7M1207.5 261.1L1216.8 217.1M1211.9 260.8L1223.1 216.6M1216.4 260.5L1229.4 216.2M1220.8 260.3L1235.6 215.9M1225.2 260.2L1241.8 215.8M1229.5 260.2L1248.0 215.8M1233.8 260.3L1254.1 215.9M1238.1 260.5L1260.1 216.1M1242.3 260.7L1266.1 216.5M1246.5 261.1L1272.0 217.0M1250.6 261.5L1277.9 217.6M1254.7 262.0L1283.7 218.3M1258.7 262.6L1289.4 219.1M1262.6 263.3L1295.0 220.1M1266.5 264.0L1300.5 221.2M1270.4 264.9L1305.9 222.4M1274.1 265.8L1311.3 223.7M1277.8 266.8L1316.5 225.1M1281.4 267.9L1321.6 226.7M1285.0 269.1L1326.6 228.3M1288.4 270.3L1331.5 230.1M1291.8 271.7L1336.3 232.0M1295.1 273.1L1341.0 234.0M1298.3 274.5L1345.5 236.1M1301.4 276.1L1349.9 238.3M1304.4 277.7L1354.1 240.6M1307.3 279.4L1358.3 243.0M1310.1 281.2L1362.3 245.6M1312.8 283.1L1366.1 248.2M1315.4 285.0L1369.8 250.9M1317.9 287.0L1373.3 253.7M1320.3 289.0L1376.7 256.6M1322.5 291.1L1379.9 259.6M1324.7 293.3L1383.0 262.7M1326.8 295.5L1385.9 265.8M1328.7 297.8L1388.7 269.1M1330.5 300.1L1391.2 272.4M1332.2 302.5L1393.7 275.8M1333.8 305.0L1395.9 279.3M1335.3 307.5L1398.0 282.8M1336.6 310.0L1399.9 286.4M1337.8 312.6L1401.6 290.1M1338.9 315.3L1403.1 293.9M1339.9 318.0L1404.5 297.7M1278.6 339.3L1340.8 321.2M1279.2 341.7L1341.8 325.2M1279.6 344.2L1342.5 329.4M1279.9 346.7L1342.9 333.6M1280.0 349.3L1343.1 337.8M1279.9 351.9L1342.9 342.1M1279.6 354.5L1342.5 346.5M1279.2 357.1L1341.8 350.9M1278.6 359.8L1340.9 355.3M1277.9 362.4L1339.6 359.7M1277.0 365.1L1338.1 364.2M1275.9 367.8L1336.4 368.6M1274.7 370.4L1334.3 373.1M1273.3 373.1L1332.0 377.5M1271.8 375.8L1329.5 381.9M1270.1 378.4L1326.7 386.3M1268.3 381.0L1323.6 390.7M1266.3 383.6L1320.3 395.0M1264.2 386.1L1316.8 399.2M1261.9 388.7L1313.0 403.4M1259.5 391.2L1309.0 407.6M1257.0 393.6L1304.8 411.7M1254.3 396.0L1300.4 415.6M1251.6 398.3L1295.7 419.5M1248.7 400.6L1290.9 423.4M1245.7 402.8L1285.9 427.1M1242.6 405.0L1280.8 430.7M1239.4 407.1L1275.4 434.2M1236.1 409.1L1269.9 437.5M1232.7 411.1L1264.3 440.8M1229.2 412.9L1258.5 443.9M1225.7 414.7L1252.6 446.9M1222.0 416.4L1246.5 449.7M1218.3 418.1L1240.4 452.4M1214.6 419.6L1234.1 455.0M1210.8 421.0L1227.8 457.4M1207.0 422.4L1221.4 459.6M1203.1 423.6L1214.9 461.7M1199.2 424.7L1208.4 463.5M1195.2 425.8L1201.9 465.3M1191.3 426.7L1195.3 466.8M1187.3 427.5L1188.7 468.2M1183.4 428.2L1182.1 469.4M1179.4 428.9L1175.5 470.4M1175.5 429.4L1168.9 471.3M1171.5 429.8L1162.3 471.9M1167.6 430.0L1155.8 472.4M1163.7 430.2L1149.4 472.7M1159.9 430.3L1143.0 472.8M1156.1 430.2L1136.6 472.7M1152.4 430.1L1130.4 472.4M1148.7 429.8L1124.2 472.0M1145.0 429.4L1118.2 471.3M1141.5 428.9L1112.3 470.5M1138.0 428.3L1106.5 469.5M1134.6 427.6L1100.8 468.3M1131.3 426.7L1095.3 466.9M1128.1 425.8L1090.0 465.4M1125.0 424.8L1084.8 463.6M1122.0 423.6L1079.8 461.7M1119.1 422.4L1075.0 459.7M1116.3 421.1L1070.4 457.5M1113.7 419.6L1065.9 455.1M1111.1 418.1L1061.7 452.5M1108.7 416.5L1057.7 449.9M1106.5 414.8L1053.9 447.0M1104.4 413.0L1050.4 444.0M1102.4 411.2L1047.1 440.9M1100.5 409.2L1044.0 437.7M1098.8 407.2L1041.2 434.3M1097.3 405.1L1038.6 430.8M1095.9 402.9L1036.3 427.2M1094.7 400.7L1034.3 423.5M1093.6 398.4L1032.5 419.7M1092.7 396.1L1031.0 415.8M1092.0 393.7L1029.8 411.8M1091.4 391.3L1028.8 407.8M1091.0 388.8L1028.1 403.6M1090.7 386.3L1027.7 399.4M1090.6 383.7L1027.5 395.2M1090.7 381.1L1027.7 390.9M1091.0 378.5L1028.1 386.5M1091.4 375.9L1028.8 382.1M1092.0 373.2L1029.7 377.7M1092.7 370.6L1031.0 373.3M1093.6 367.9L1032.5 368.8M1094.7 365.2L1034.2 364.4M1095.9 362.6L1036.3 359.9M1097.3 359.9L1038.6 355.5M1098.8 357.2L1041.1 351.1M1100.5 354.6L1043.9 346.7M1102.3 352.0L1047.0 342.3M1104.3 349.4L1050.3 338.0M1106.4 346.9L1053.8 333.8M1108.7 344.3L1057.6 329.6M1111.1 341.8L1061.6 325.4M1113.6 339.4L1065.8 321.3M1116.3 337.0L1070.2 317.4M1119.0 334.7L1074.9 313.5M1121.9 332.4L1079.7 309.6M1124.9 330.2L1084.7 305.9M1128.0 328.0L1089.8 302.3M1131.2 325.9L1095.2 298.8M1134.5 323.9L1100.7 295.5M1137.9 321.9L1106.3 292.2M1141.4 320.1L1112.1 289.1M1144.9 318.3L1118.0 286.1M1148.6 316.6L1124.1 283.3M1152.3 314.9L1130.2 280.6M1156.0 313.4L1136.5 278.0M1159.8 312.0L1142.8 275.6M1163.6 310.6L1149.2 273.4M1167.5 309.4L1155.7 271.3M1171.4 308.3L1162.2 269.5M1175.4 307.2L1168.7 267.7M1179.3 306.3L1175.3 266.2M1183.3 305.5L1181.9 264.8M1187.2 304.8L1188.5 263.6M1191.2 304.1L1195.1 262.6M1195.1 303.6L1201.7 261.7M1199.1 303.2L1208.3 261.1M1203.0 303.0L1214.8 260.6M1206.9 302.8L1221.2 260.3M1210.7 302.7L1227.6 260.2M1214.5 302.8L1234.0 260.3M1218.2 302.9L1240.2 260.6M1221.9 303.2L1246.4 261.0M1225.6 303.6L1252.4 261.7M1229.1 304.1L1258.3 262.5M1232.6 304.7L1264.1 263.5M1236.0 305.4L1269.8 264.7M1239.3 306.3L1275.3 266.1M1242.5 307.2L1280.6 267.6M1245.6 308.2L1285.8 269.4M1248.6 309.4L1290.8 271.3M1251.5 310.6L1295.6 273.3M1254.3 311.9L1300.2 275.5M1256.9 313.4L1304.7 277.9M1259.5 314.9L1308.9 280.5M1261.9 316.5L1312.9 283.1M1264.1 318.2L1316.7 286.0M1266.2 320.0L1320.2 289.0M1268.2 321.8L1323.5 292.1M1270.1 323.8L1326.6 295.3M1271.8 325.8L1329.4 298.7M1273.3 327.9L1332.0 302.2M1274.7 330.1L1334.3 305.8M1275.9 332.3L1336.3 309.5M1277.0 334.6L1338.1 313.3M1277.9 336.9L1339.6 317.2M1213.6 358.4L1278.8 339.9M1213.9 359.7L1279.6 344.0M1214.0 361.0L1279.9 348.2M1213.9 362.3L1279.8 352.5M1213.8 363.6L1279.3 356.9M1213.5 364.9L1278.2 361.3M1213.0 366.3L1276.8 365.8M1212.4 367.6L1274.8 370.2M1211.7 369.0L1272.5 374.6M1210.9 370.3L1269.7 379.0M1209.9 371.6L1266.5 383.4M1208.8 372.9L1262.9 387.6M1207.6 374.2L1258.9 391.8M1206.3 375.4L1254.6 395.8M1204.9 376.5L1249.9 399.7M1203.4 377.7L1244.9 403.4M1201.8 378.7L1239.6 406.9M1200.1 379.8L1234.1 410.3M1198.3 380.7L1228.3 413.4M1196.5 381.6L1222.3 416.3M1194.7 382.4L1216.2 418.9M1192.7 383.1L1209.9 421.4M1190.8 383.8L1203.4 423.5M1188.8 384.3L1196.9 425.3M1186.8 384.8L1190.3 426.9M1184.8 385.2L1183.7 428.2M1182.8 385.5L1177.1 429.2M1180.8 385.7L1170.6 429.8M1178.9 385.8L1164.1 430.2M1176.9 385.8L1157.7 430.3M1175.0 385.7L1151.4 430.0M1173.2 385.6L1145.4 429.4M1171.4 385.3L1139.5 428.5M1169.7 384.9L1133.8 427.4M1168.1 384.5L1128.4 425.9M1166.5 384.0L1123.2 424.1M1165.0 383.3L1118.4 422.1M1163.7 382.6L1113.9 419.8M1162.4 381.9L1109.7 417.2M1161.3 381.0L1105.9 414.4M1160.2 380.1L1102.5 411.3M1159.3 379.1L1099.5 408.1M1158.5 378.0L1097.0 404.6M1157.9 376.9L1094.8 400.9M1157.4 375.8L1093.1 397.1M1157.0 374.6L1091.8 393.1M1156.7 373.3L1091.0 389.0M1156.6 372.0L1090.7 384.8M1156.7 370.7L1090.8 380.5M1156.8 369.4L1091.3 376.1M1157.1 368.1L1092.4 371.7M1157.6 366.7L1093.8 367.2M1158.2 365.4L1095.8 362.8M1158.9 364.0L1098.1 358.4M1159.7 362.7L1100.9 354.0M1160.7 361.4L1104.1 349.6M1161.8 360.1L1107.7 345.4M1163.0 358.8L1111.7 341.2M1164.3 357.6L1116.0 337.2M1165.7 356.5L1120.7 333.3M1167.2 355.3L1125.7 329.6M1168.8 354.3L1131.0 326.1M1170.5 353.2L1136.5 322.7M1172.3 352.3L1142.3 319.6M1174.1 351.4L1148.3 316.7M1175.9 350.6L1154.4 314.1M1177.9 349.9L1160.7 311.6M1179.8 349.2L1167.2 309.5M1181.8 348.7L1173.7 307.7M1183.8 348.2L1180.3 306.1M1185.8 347.8L1186.9 304.8M1187.8 347.5L1193.5 303.8M1189.8 347.3L1200.0 303.2M1191.7 347.2L1206.5 302.8M1193.7 347.2L1212.9 302.7M1195.6 347.3L1219.2 303.0M1197.4 347.4L1225.2 303.6M1199.2 347.7L1231.1 304.5M1200.9 348.1L1236.8 305.6M1202.5 348.5L1242.2 307.1M1204.1 349.0L1247.4 308.9M1205.6 349.7L1252.2 310.9M1206.9 350.4L1256.7 313.2M1208.2 351.1L1260.9 315.8M1209.3 352.0L1264.7 318.6M1210.4 352.9L1268.1 321.7M1211.3 353.9L1271.1 324.9M1212.1 355.0L1273.6 328.4M1212.7 356.1L1275.8 332.1M1213.2 357.2L1277.5 335.9" fill="none" stroke="#1c160a" stroke-width="1.15"/></g><ellipse cx="1185.3" cy="366.5" rx="294.6" ry="181.2" transform="rotate(-16.8 1185.3 366.5)" fill="none" stroke="#00f000" stroke-width="2.2"/><path d="M945.0 386.0 C945.9 390.5 951.0 395.0 956.0 397.0 C961.0 399.0 965.1 398.9 975.0 398.0 C984.9 397.1 999.8 393.0 1015.6 391.5 C1031.4 390.0 1056.7 391.6 1069.8 388.8 C1082.9 386.1 1087.7 380.0 1094.0 375.0 C1100.3 370.0 1104.6 364.4 1107.8 359.0 C1111.0 353.6 1114.0 347.7 1113.0 342.7 C1112.0 337.7 1107.5 335.3 1102.0 329.0 C1096.5 322.7 1087.7 312.7 1080.0 305.0 C1072.3 297.3 1063.2 287.3 1056.0 283.0 C1048.8 278.7 1044.2 278.1 1037.0 279.0 C1029.8 279.9 1023.3 279.7 1013.0 288.5 C1002.7 297.3 985.4 318.4 975.0 332.0 C964.6 345.6 955.5 361.0 950.5 370.0 C945.5 379.0 944.1 381.5 945.0 386.0 Z" fill="#9a8450" stroke="#00f000" stroke-width="2.2"/><path d="M980.0 395.6 C980.0 389.1 1003.9 364.8 1015.6 353.5 C1027.3 342.2 1040.1 334.3 1050.0 328.0 C1059.9 321.7 1069.0 315.9 1075.0 315.6 C1081.0 315.3 1081.5 320.6 1086.0 326.0 C1090.5 331.4 1100.7 339.8 1102.0 348.0 C1103.3 356.2 1099.4 368.0 1094.0 375.0 C1088.6 382.0 1082.9 387.0 1069.8 390.0 C1056.7 393.0 1030.6 391.9 1015.6 392.8 C1000.6 393.7 980.0 402.2 980.0 395.6 Z" fill="url(#bg)" stroke="#00f000" stroke-width="2"/><path d="M1013 289 Q1040 280 1058 283 L1072 305 Q1040 300 1018 306 Z" fill="#c8ac62"/><path d="M956 397 Q975 340 1018 305 Q1050 296 1075 315" fill="none" stroke="#00f000" stroke-width="2"/><path d="M1013 289 L1018 306 M1056 283 L1062 303" fill="none" stroke="#00f000" stroke-width="2"/><path d="M1295.0 318.0 C1295.0 308.0 1296.2 298.3 1300.0 290.0 C1303.8 281.7 1309.7 274.7 1318.0 268.0 C1326.3 261.3 1337.7 251.0 1350.0 250.0 C1362.3 249.0 1380.0 255.3 1392.0 262.0 C1404.0 268.7 1415.3 280.3 1422.0 290.0 C1428.7 299.7 1430.7 310.8 1432.0 320.0 C1433.3 329.2 1433.3 338.0 1430.0 345.0 C1426.7 352.0 1419.5 358.5 1412.0 362.0 C1404.5 365.5 1395.0 365.3 1385.0 366.0 C1375.0 366.7 1364.2 365.2 1352.0 366.0 C1339.8 366.8 1320.7 373.7 1312.0 371.0 C1303.3 368.3 1302.8 358.8 1300.0 350.0 C1297.2 341.2 1295.0 328.0 1295.0 318.0 Z" fill="#9a8450" stroke="#00f000" stroke-width="2.2"/><path d="M1322.5 320.0 C1325.0 315.4 1327.5 313.8 1335.0 307.5 C1342.5 301.2 1356.7 286.2 1367.5 282.5 C1378.3 278.8 1391.2 282.5 1400.0 285.0 C1408.8 287.5 1415.0 292.5 1420.0 297.5 C1425.0 302.5 1428.8 307.5 1430.0 315.0 C1431.2 322.5 1430.4 335.0 1427.5 342.5 C1424.6 350.0 1419.6 356.2 1412.5 360.0 C1405.4 363.8 1395.0 364.4 1385.0 365.0 C1375.0 365.6 1361.7 363.8 1352.5 363.8 C1343.3 363.8 1335.4 369.8 1330.0 365.0 C1324.6 360.2 1321.2 342.5 1320.0 335.0 C1318.8 327.5 1320.0 324.6 1322.5 320.0 Z" fill="url(#bg)" stroke="#00f000" stroke-width="2"/><path d="M967.5 472.5 C967.5 468.3 971.7 463.6 975.0 460.0 C978.3 456.4 977.5 454.8 987.5 451.0 C997.5 447.2 1020.0 440.6 1035.0 437.5 C1050.0 434.4 1065.8 433.8 1077.5 432.5 C1089.2 431.2 1096.2 428.6 1105.0 430.0 C1113.8 431.4 1124.4 436.8 1130.0 441.0 C1135.6 445.2 1138.3 450.6 1138.8 455.0 C1139.2 459.4 1135.6 462.9 1132.5 467.5 C1129.4 472.1 1123.8 476.2 1120.0 482.5 C1116.2 488.8 1115.0 498.3 1110.0 505.0 C1105.0 511.7 1096.2 518.8 1090.0 522.5 C1083.8 526.2 1081.7 527.9 1072.5 527.5 C1063.3 527.1 1047.5 524.6 1035.0 520.0 C1022.5 515.4 1007.5 505.8 997.5 500.0 C987.5 494.2 980.0 489.6 975.0 485.0 C970.0 480.4 967.5 476.7 967.5 472.5 Z" fill="#9a8450" stroke="#00f000" stroke-width="2.2"/><path d="M977.5 485.0 C977.5 479.8 985.4 479.0 997.5 473.8 C1009.6 468.5 1039.2 456.2 1050.0 453.8 C1060.8 451.2 1057.9 450.2 1062.5 458.8 C1067.1 467.3 1071.7 498.5 1077.5 505.0 C1083.3 511.5 1091.5 499.2 1097.5 497.5 C1103.5 495.8 1112.5 492.1 1113.8 495.0 C1115.0 497.9 1110.6 509.6 1105.0 515.0 C1099.4 520.4 1091.7 526.7 1080.0 527.5 C1068.3 528.3 1048.8 523.8 1035.0 520.0 C1021.2 516.2 1007.1 510.8 997.5 505.0 C987.9 499.2 977.5 490.2 977.5 485.0 Z" fill="url(#bg)" stroke="#00f000" stroke-width="2"/><path d="M1085 430 L1105 430 L1130 441 L1139 455 L1132 468 L1120 483 L1112 497 L1097 498 Z" fill="#c8ac64"/><path d="M1080 432 L1099 498 M1110 431 L1127 475 M989 451 L994 470" fill="none" stroke="#00f000" stroke-width="2"/><path d="M1196.0 505.0 C1194.1 499.4 1195.8 492.0 1197.5 481.8 C1199.2 471.6 1197.6 454.0 1206.0 443.8 C1214.4 433.6 1234.8 425.5 1248.0 420.7 C1261.2 415.9 1272.7 415.8 1285.0 415.0 C1297.3 414.2 1310.2 414.4 1322.0 416.0 C1333.8 417.6 1348.8 420.8 1355.6 424.4 C1362.4 428.0 1362.7 433.7 1363.0 437.4 C1363.3 441.1 1367.2 438.8 1357.4 446.7 C1347.6 454.6 1319.0 476.0 1304.0 484.7 C1289.0 493.4 1281.0 493.9 1267.6 499.0 C1254.2 504.1 1233.6 512.6 1223.8 515.3 C1214.0 518.0 1213.6 517.0 1209.0 515.3 C1204.4 513.6 1197.9 510.6 1196.0 505.0 Z" fill="url(#hw)" stroke="#00f000" stroke-width="2.2"/><path d="M1305 436 L1312 432 L1357 445 L1348 452 L1318 472 L1312 478 Z" fill="#9a8450" stroke="#00f000" stroke-width="2"/><path d="M1228.0 512.4 C1227.7 511.6 1251.0 500.6 1260.0 496.0 C1269.0 491.4 1275.7 487.0 1282.0 485.0 C1288.3 483.0 1301.3 481.3 1298.0 484.0 C1294.7 486.7 1273.7 496.3 1262.0 501.0 C1250.3 505.7 1228.3 513.2 1228.0 512.4 Z" fill="#8090a8" stroke="#00f000" stroke-width="1.5"/><path d="M1203 460 L1221 514 M1223 433 L1243 497 M1250 422 L1267 495 M1280 416 L1300 482 M1352 425 L1358 445 M1201 500 L1205 486 L1210 512" fill="none" stroke="#00f000" stroke-width="2"/><path d="M1131.0 238.0 C1132.2 231.7 1133.5 223.8 1145.0 218.0 C1156.5 212.2 1180.8 206.3 1200.0 203.0 C1219.2 199.7 1243.3 197.8 1260.0 198.0 C1276.7 198.2 1291.3 200.0 1300.0 204.0 C1308.7 208.0 1312.7 215.7 1312.0 222.0 C1311.3 228.3 1306.3 236.3 1296.0 242.0 C1285.7 247.7 1269.3 252.5 1250.0 256.0 C1230.7 259.5 1198.7 263.0 1180.0 263.0 C1161.3 263.0 1146.2 260.2 1138.0 256.0 C1129.8 251.8 1129.8 244.3 1131.0 238.0 Z" fill="#9a8450" stroke="#00f000" stroke-width="2.2"/><path d="M1160.0 250.0 C1156.7 245.5 1183.3 232.7 1200.0 228.0 C1216.7 223.3 1244.2 222.0 1260.0 222.0 C1275.8 222.0 1291.7 224.2 1295.0 228.0 C1298.3 231.8 1292.5 240.5 1280.0 245.0 C1267.5 249.5 1240.0 254.2 1220.0 255.0 C1200.0 255.8 1163.3 254.5 1160.0 250.0 Z" fill="url(#bg)" stroke="#00f000" stroke-width="2"/><ellipse cx="1190" cy="381" rx="60" ry="36" transform="rotate(-14 1190 381)" fill="url(#hw)" stroke="#00f000" stroke-width="2.2"/><ellipse cx="1091" cy="406" rx="14" ry="10" transform="rotate(-10 1091 406)" fill="url(#hw)" stroke="#00f000" stroke-width="2.2"/><ellipse cx="1279" cy="391" rx="15" ry="10" transform="rotate(-10 1279 391)" fill="url(#hw)" stroke="#00f000" stroke-width="2.2"/><ellipse cx="1174" cy="445" rx="15" ry="10" transform="rotate(-10 1174 445)" fill="url(#hw)" stroke="#00f000" stroke-width="2.2"/><ellipse cx="1148" cy="327" rx="14" ry="9" transform="rotate(-10 1148 327)" fill="url(#hw)" stroke="#00f000" stroke-width="2.2"/><path d="M1075 299 L1140 270" fill="none" stroke="#00f000" stroke-width="2"/><path d="M1108 329 L1140 313" fill="none" stroke="#00f000" stroke-width="2"/><path d="M1013 391 L1024 438" fill="none" stroke="#00f000" stroke-width="2"/><path d="M1060 393 L1070 432" fill="none" stroke="#00f000" stroke-width="2"/><path d="M1018 413 L1064 413" fill="none" stroke="#00f000" stroke-width="2"/><path d="M1312 238 Q1340 248 1372 262" fill="none" stroke="#00f000" stroke-width="2"/><path d="M1430 306 Q1450 300 1464 292" fill="none" stroke="#00f000" stroke-width="2"/><path d="M1318.5 369.8 L1290.7 415" fill="none" stroke="#00f000" stroke-width="2"/><path d="M1353.7 365 L1320.4 415" fill="none" stroke="#00f000" stroke-width="2"/><path d="M1300 330 L1313 370.7" fill="none" stroke="#00f000" stroke-width="2"/><path d="M1320.4 330 L1333.3 367" fill="none" stroke="#00f000" stroke-width="2"/><path d="M1138 461 L1200 465" fill="none" stroke="#00f000" stroke-width="2"/></svg>
<div class="t" style="left:1600px;width:224px;text-align:right;top:85px;font-size:17.5px;line-height:20px;color:#f4f4f4;letter-spacing:-0.1px">Model Info: Untitled*</div>
<div class="a" style="left:524px;top:741px;width:2px;height:2px;background:#222"></div>
<div class="a" style="left:524px;top:747px;width:2px;height:2px;background:#222"></div>
<div class="a" style="left:524px;top:753px;width:2px;height:2px;background:#222"></div>
<div class="a" style="left:524px;top:759px;width:2px;height:2px;background:#222"></div>
<svg class="a" style="left:531px;top:738px" width="24" height="24" viewBox="0 0 24 24"><path d="M2 3 h7 l2 2 h9 v12 h-18z" fill="#e8c060"/><path d="M2 6 h18 v11 h-18z" fill="#f8dc88"/><path transform="translate(0,2)" d="M9 11 l4-2 4 2 -4 2z" fill="#2fd02f"/><path transform="translate(0,2)" d="M9 11 v3 l4 2 v-3z" fill="#1a901a"/><path transform="translate(0,2)" d="M17 11 v3 l-4 2 v-3z" fill="#22b022"/><path transform="translate(0,2)" d="M5 16 l4-2 4 2 -4 2z" fill="#4040ff"/><path transform="translate(0,2)" d="M5 16 v3 l4 2 v-3z" fill="#1010b0"/><path transform="translate(0,2)" d="M13 16 v3 l-4 2 v-3z" fill="#2020d0"/><path transform="translate(0,2)" d="M13 16 l4-2 4 2 -4 2z" fill="#f0b040"/><path transform="translate(0,2)" d="M13 16 v3 l4 2 v-3z" fill="#b07010"/><path transform="translate(0,2)" d="M21 16 v3 l-4 2 v-3z" fill="#d09020"/></svg>
<svg class="a" style="left:558px;top:738px" width="24" height="24" viewBox="0 0 24 24"><path d="M2 3 h7 l2 2 h9 v12 h-18z" fill="#e8c060"/><path d="M2 6 h18 v11 h-18z" fill="#f8dc88"/><path d="M4 15 l8-4 8 4 -8 4z" fill="#5a6aff"/><path d="M4 15 v3 l8 4 v-3z" fill="#1a2ab0"/><path d="M20 15 v3 l-8 4 v-3z" fill="#2a3ad0"/></svg>
<svg class="a" style="left:585px;top:738px" width="24" height="24" viewBox="0 0 24 24"><path d="M2 3 h7 l2 2 h9 v12 h-18z" fill="#e8c060"/><path d="M2 6 h18 v11 h-18z" fill="#f8dc88"/><path d="M8 12 h8 M8 22 h8 M9 12 l6 10 M15 12 l-6 10" stroke="#333" stroke-width="1.2" fill="none"/><path d="M14 10 q6-2 8 4" stroke="#e02020" stroke-width="1.5" fill="none"/></svg>
<svg class="a" style="left:612px;top:738px" width="24" height="24" viewBox="0 0 24 24"><path d="M2 3 h7 l2 2 h9 v12 h-18z" fill="#e8c060"/><path d="M2 6 h18 v11 h-18z" fill="#f8dc88"/><text x="4" y="10" font-size="8" font-weight="bold" fill="#000">t</text><path d="M5 17 l8-4 9 4 -8 4z" fill="#888"/><path d="M5 17 v3 l9 4 v-3z" fill="#444"/><path d="M22 17 v3 l-8 4 v-3z" fill="#666"/><path d="M3 14 v8" stroke="#e03030" stroke-width="1"/></svg>
<svg class="a" style="left:639px;top:738px" width="24" height="24" viewBox="0 0 24 24"><path d="M2 3 h7 l2 2 h9 v12 h-18z" fill="#e8c060"/><path d="M2 6 h18 v11 h-18z" fill="#f8dc88"/><path d="M12 4 v12" stroke="#e00" stroke-width="2.5"/><path d="M8 13 l4 5 4-5z" fill="#e00"/><circle cx="12" cy="20" r="2" fill="#000"/><rect x="15" y="16" width="6" height="6" fill="#40b040"/></svg>
<svg class="a" style="left:666px;top:738px" width="24" height="24" viewBox="0 0 24 24"><path d="M2 3 h7 l2 2 h9 v12 h-18z" fill="#e8c060"/><path d="M2 6 h18 v11 h-18z" fill="#f8dc88"/><path d="M11 9 v8 M11 17 l-6 4 M11 17 l7 3" stroke="#6a6ab8" stroke-width="1.8"/><rect x="15" y="16" width="6" height="6" fill="#40b040"/></svg>
<svg class="a" style="left:693px;top:749px" width="7" height="4" viewBox="0 0 7 4"><path d="M0 0 H7 L3.5 4 Z" fill="#000"/></svg>
<div class="a" style="left:708px;top:741px;width:1px;height:20px;background:#999"></div>
<svg class="a" style="left:717px;top:738px" width="24" height="24" viewBox="0 0 24 24"><path d="M4 6 l4-4 4 4 4-4 4 4 -4 4 4 4 -4 4 -4-4 -4 4 -4-4 4-4z" fill="#e02828" transform="translate(0,3)"/></svg>
<svg class="a" style="left:744px;top:738px" width="24" height="24" viewBox="0 0 24 24"><rect x="2" y="8" width="13" height="12" rx="3" fill="#999"/><rect x="6" y="5" width="13" height="12" rx="3" fill="#aaa" stroke="#777" stroke-width=".5"/><rect x="10" y="3" width="12" height="12" rx="3" fill="#ccc" stroke="#777" stroke-width=".5"/></svg>
<svg class="a" style="left:771px;top:738px" width="24" height="24" viewBox="0 0 24 24"><path d="M2 3 h7 l2 2 h9 v12 h-18z" fill="#e8c060"/><path d="M2 6 h18 v11 h-18z" fill="#f8dc88"/><path d="M6 10 h7 l2 2 h7 v10 h-16z" fill="#f0c050"/><path d="M8 14 q2 6 8 4 l-2 3 5-2 -3-4 0 2 q-5 1 -6-3z" fill="#e02020"/></svg>
<svg class="a" style="left:798px;top:738px" width="24" height="24" viewBox="0 0 24 24"><text x="11" y="9" font-size="8" font-weight="bold" fill="#333">2</text><text x="9" y="15" font-size="8" font-weight="bold" fill="#333">1</text><text x="10" y="22" font-size="8" font-weight="bold" fill="#333">3</text><path d="M3 9 l4-4 M19 6 l3 4" stroke="#e02020" stroke-width="1.5"/></svg>
<div class="a" style="left:831px;top:741px;width:2px;height:2px;background:#222"></div>
<div class="a" style="left:831px;top:747px;width:2px;height:2px;background:#222"></div>
<div class="a" style="left:831px;top:753px;width:2px;height:2px;background:#222"></div>
<div class="a" style="left:831px;top:759px;width:2px;height:2px;background:#222"></div>
<div class="a" style="left:837px;top:739px;width:105px;height:22px;background:#fff"></div>
<div class="a" style="left:920px;top:739px;width:22px;height:22px;background:#f0f0f0"></div>
<svg class="a" style="left:838px;top:739px" width="22" height="22" viewBox="0 0 22 22"><path d="M3 12 q2-9 14-7 l2 3 q-8-2 -12 6z" fill="#6a6ab8"/><rect x="4" y="17" width="14" height="3" fill="url(#rb)"/></svg>
<div class="t" style="left:858px;top:742px;font-size:14px;line-height:17px;letter-spacing:-0.4px;color:#333">By Part</div>
<svg class="a" style="left:928px;top:748px" width="7" height="4" viewBox="0 0 7 4"><path d="M0 0 H7 L3.5 4 Z" fill="#000"/></svg>
<svg class="a" style="left:946px;top:738px" width="22" height="22" viewBox="0 0 22 22"><path d="M2 13 q3-8 12-7 l4 4 q-8-2 -11 7z" fill="#fff" stroke="#555"/></svg>
<svg class="a" style="left:969px;top:749px" width="7" height="4" viewBox="0 0 7 4"><path d="M0 0 H7 L3.5 4 Z" fill="#000"/></svg>
<svg class="a" style="left:980px;top:738px" width="22" height="22" viewBox="0 0 22 22"><path d="M2 13 q3-8 12-7 l5 4 q-8-2 -12 7z" fill="#6a6ab8" stroke="#445"/></svg>
<svg class="a" style="left:1006px;top:749px" width="7" height="4" viewBox="0 0 7 4"><path d="M0 0 H7 L3.5 4 Z" fill="#000"/></svg>
<svg class="a" style="left:1017px;top:738px" width="24" height="24" viewBox="0 0 24 24"><path d="M4 7 l8-4 9 4 v10 l-9 5 -8-4z" fill="#aab" stroke="#556"/><path d="M4 7 l8 4 9-4 M12 11 v11" stroke="#556" fill="none"/><path d="M4 7 l8 4 v11 l-8-4z" fill="#8a8ad0"/></svg>
<div class="a" style="left:1049px;top:741px;width:1px;height:20px;background:#999"></div>
<div class="a" style="left:1056px;top:739px;width:112px;height:22px;background:#fff"></div>
<div class="a" style="left:1146px;top:739px;width:22px;height:22px;background:#f0f0f0"></div>
<svg class="a" style="left:1057px;top:739px" width="22" height="22" viewBox="0 0 22 22"><path d="M3 6 l8-4 8 4 v9 l-8 4 -8-4z" fill="#5a5ab0" stroke="#334"/><path d="M3 9 l8 4 8-4 M11 13 v6 M7 4 v11 M15 4 v11" stroke="#9a9ae0" stroke-width=".7" fill="none"/><rect x="3" y="18" width="14" height="3" fill="url(#rb)"/></svg>
<div class="t" style="left:1077px;top:742px;font-size:14px;line-height:17px;letter-spacing:-0.4px;color:#333">By Part</div>
<svg class="a" style="left:1154px;top:748px" width="7" height="4" viewBox="0 0 7 4"><path d="M0 0 H7 L3.5 4 Z" fill="#000"/></svg>
<svg class="a" style="left:1170px;top:738px" width="24" height="24" viewBox="0 0 24 24"><path d="M3 7 l9-4 9 4 v10 l-9 5 -9-4z M3 7 l9 4 9-4 M12 11 v11 M7 5 l9 4 v10 M17 5 l-9 4 v10 M3 12 l9 4 9-4" fill="none" stroke="#777" stroke-width=".8"/></svg>
<svg class="a" style="left:1196px;top:749px" width="7" height="4" viewBox="0 0 7 4"><path d="M0 0 H7 L3.5 4 Z" fill="#000"/></svg>
<svg class="a" style="left:1206px;top:738px" width="24" height="24" viewBox="0 0 24 24"><path d="M3 7 l9-4 9 4 v10 l-9 5 -9-4z" fill="#4a4aa0" stroke="#334"/><path d="M3 7 l9 4 9-4 M12 11 v11 M7 5 l9 4 v10 M17 5 l-9 4 v10 M3 12 l9 4 9-4" fill="none" stroke="#9a9ae0" stroke-width=".7"/></svg>
<svg class="a" style="left:1232px;top:749px" width="7" height="4" viewBox="0 0 7 4"><path d="M0 0 H7 L3.5 4 Z" fill="#000"/></svg>
<svg class="a" style="left:1244px;top:738px" width="22" height="22" viewBox="0 0 22 22"><path d="M3 16 l15-8" stroke="#333" stroke-width="1.6"/></svg>
<svg class="a" style="left:1268px;top:749px" width="7" height="4" viewBox="0 0 7 4"><path d="M0 0 H7 L3.5 4 Z" fill="#000"/></svg>
<svg class="a" style="left:1280px;top:738px" width="24" height="22" viewBox="0 0 24 22"><path d="M2 11 l10-5 10 5 -10 5z" fill="#888" stroke="#555"/><path d="M7 8.5 l10 5 M17 8.5 l-10 5" stroke="#ddd" stroke-width=".8"/></svg>
<svg class="a" style="left:1305px;top:749px" width="7" height="4" viewBox="0 0 7 4"><path d="M0 0 H7 L3.5 4 Z" fill="#000"/></svg>
<svg class="a" style="left:1316px;top:738px" width="24" height="22" viewBox="0 0 24 22"><path d="M2 10 l10-5 10 5 -10 5z" fill="#7a8af0" stroke="#3a3aa0"/><path d="M2 10 v3 l10 5 10-5 v-3 l-10 5z" fill="#3a3ab0"/></svg>
<svg class="a" style="left:1342px;top:749px" width="7" height="4" viewBox="0 0 7 4"><path d="M0 0 H7 L3.5 4 Z" fill="#000"/></svg>
<svg class="a" style="left:1355px;top:740px" width="18" height="20" viewBox="0 0 18 20"><rect x="3" y="10" width="5" height="5" fill="#6a6ac0"/><rect x="10" y="7" width="5" height="5" fill="#6a6ac0"/><rect x="3" y="3" width="5" height="4" fill="#8a8ad0" transform="translate(7,-1)"/><rect x="3" y="14" width="4" height="4" fill="#8a8ad0"/></svg>
<svg class="a" style="left:1380px;top:738px" width="22" height="24" viewBox="0 0 22 24"><rect x="2" y="3" width="18" height="14" fill="#2a60a8" stroke="#333"/><rect x="4" y="5" width="14" height="10" fill="#5aa0e0"/><rect x="9" y="17" width="4" height="3" fill="#333"/><rect x="6" y="20" width="10" height="2" fill="#333"/></svg>
<div class="a" style="left:1412px;top:741px;width:2px;height:2px;background:#222"></div>
<div class="a" style="left:1412px;top:747px;width:2px;height:2px;background:#222"></div>
<div class="a" style="left:1412px;top:753px;width:2px;height:2px;background:#222"></div>
<div class="a" style="left:1412px;top:759px;width:2px;height:2px;background:#222"></div>
<svg class="a" style="left:1421px;top:738px" width="24" height="24" viewBox="0 0 24 24"><path d="M12 2 l3 7 7 .5 -5.5 4.5 2 7.5 -6.5-4 -6.5 4 2-7.5 -5.5-4.5 7-.5z" fill="#f8c820" stroke="#c08000" stroke-width=".8"/></svg>
<div class="a" style="left:517px;top:950px;width:1320px;height:2px;background:#606060"></div>
<div class="a" style="left:1264px;top:957px;width:574px;height:2px;background:#111"></div>
<div class="a" style="left:1396px;top:957px;width:4px;height:2px;background:#f0f0f0"></div>
<div class="a" style="left:1531px;top:957px;width:4px;height:2px;background:#f0f0f0"></div>
<div class="a" style="left:1688px;top:957px;width:4px;height:2px;background:#f0f0f0"></div>
<div class="a" style="left:519px;top:780px;width:35px;height:23px;background:#f0f0f0;border-top:1px solid #fff;border-left:1px solid #fff;border-right:2px solid #a0a0a0;border-bottom:2px solid #a0a0a0"></div>
<svg class="a" style="left:531px;top:787px" width="12" height="8" viewBox="0 0 12 8"><path d="M0 0 H12 L6.0 8Z" fill="#000"/></svg>
<div class="a" style="left:554px;top:780px;width:183px;height:23px;background:#e6e060;border:2px solid #30e8f0"></div>
<div class="t" style="left:554px;width:183px;text-align:center;top:782.5px;font-size:17px;line-height:20px;color:#111;">surfs</div>
<div class="a" style="left:737px;top:780px;width:36px;height:23px;background:#f0f0f0;border-top:1px solid #fff;border-left:1px solid #fff;border-right:2px solid #a0a0a0;border-bottom:2px solid #a0a0a0"></div>
<svg class="a" style="left:747px;top:784px" width="16" height="14" viewBox="0 0 16 14"><rect x="1" y="1" width="3" height="12" fill="#000"/><path d="M14 1 V13 L5 7Z" fill="#000"/></svg>
<div class="t" style="left:556px;top:806px;font-size:17px;line-height:20px;color:#111;">size and bias</div>
<svg class="a" style="left:530px;top:808px" width="14" height="14" viewBox="0 0 14 14"><path d="M2 10 A5 5 0 0 1 10 2" fill="none" stroke="#777" stroke-width="1.3"/><path d="M11 4 A5 5 0 0 1 4 12" fill="none" stroke="#fff" stroke-width="1.3"/><circle cx="6.5" cy="7" r="2.3" fill="#000"/></svg>
<div class="t" style="left:556px;top:830px;font-size:17px;line-height:20px;color:#111;">batchmesh/QI optimize</div>
<svg class="a" style="left:530px;top:832px" width="14" height="14" viewBox="0 0 14 14"><path d="M2 10 A5 5 0 0 1 10 2" fill="none" stroke="#777" stroke-width="1.3"/><path d="M11 4 A5 5 0 0 1 4 12" fill="none" stroke="#fff" stroke-width="1.3"/></svg>
<div class="t" style="left:556px;top:854px;font-size:17px;line-height:20px;color:#111;">edge deviation</div>
<svg class="a" style="left:530px;top:856px" width="14" height="14" viewBox="0 0 14 14"><path d="M2 10 A5 5 0 0 1 10 2" fill="none" stroke="#777" stroke-width="1.3"/><path d="M11 4 A5 5 0 0 1 4 12" fill="none" stroke="#fff" stroke-width="1.3"/></svg>
<div class="t" style="left:556px;top:878px;font-size:17px;line-height:20px;color:#111;">surface deviation</div>
<svg class="a" style="left:530px;top:880px" width="14" height="14" viewBox="0 0 14 14"><path d="M2 10 A5 5 0 0 1 10 2" fill="none" stroke="#777" stroke-width="1.3"/><path d="M11 4 A5 5 0 0 1 4 12" fill="none" stroke="#fff" stroke-width="1.3"/></svg>
<div class="t" style="left:556px;top:902px;font-size:17px;line-height:20px;color:#111;">rigid body mesh</div>
<svg class="a" style="left:530px;top:904px" width="14" height="14" viewBox="0 0 14 14"><path d="M2 10 A5 5 0 0 1 10 2" fill="none" stroke="#777" stroke-width="1.3"/><path d="M11 4 A5 5 0 0 1 4 12" fill="none" stroke="#fff" stroke-width="1.3"/></svg>
<div class="a" style="left:519px;top:924px;width:35px;height:23px;background:#f0f0f0;border-top:1px solid #fff;border-left:1px solid #fff;border-right:2px solid #a0a0a0;border-bottom:2px solid #a0a0a0"></div>
<svg class="a" style="left:531px;top:927px" width="12" height="16" viewBox="0 0 12 16"><path d="M1 7 L6 1 L11 7Z M1 9 L6 15 L11 9Z" fill="#000"/></svg>
<div class="a" style="left:554px;top:924px;width:219px;height:23px;background:#f0f0f0;border-top:1px solid #fff;border-left:1px solid #fff;border-right:2px solid #a0a0a0;border-bottom:2px solid #a0a0a0"></div>
<div class="t" style="left:554px;width:219px;text-align:center;top:926.5px;font-size:17px;line-height:20px;color:#111;">interactive</div>
<div class="t" style="left:811px;top:782px;font-size:17px;line-height:20px;color:#111;">element size</div>
<div class="t" style="left:926px;top:782px;font-size:17px;line-height:20px;color:#111;">=</div>
<div class="t" style="left:811px;top:806px;font-size:17px;line-height:20px;color:#111;">mesh type:</div>
<div class="a" style="left:1011px;top:780px;width:183px;height:22px;background:#fff;border-top:2px solid #a0a0a0;border-left:2px solid #a0a0a0"></div>
<div class="t" style="left:1011px;width:180px;text-align:right;top:782px;font-size:17px;line-height:20px;color:#111">2.000</div>
<div class="a" style="left:975px;top:804px;width:36px;height:23px;background:#f0f0f0;border-top:1px solid #fff;border-left:1px solid #fff;border-right:2px solid #a0a0a0;border-bottom:2px solid #a0a0a0"></div>
<svg class="a" style="left:986px;top:811px" width="12" height="8" viewBox="0 0 12 8"><path d="M0 0 H12 L6.0 8Z" fill="#000"/></svg>
<div class="a" style="left:1011px;top:804px;width:182px;height:23px;background:#f0f0f0;border-top:1px solid #fff;border-left:1px solid #fff;border-right:2px solid #a0a0a0;border-bottom:2px solid #a0a0a0"></div>
<svg class="a" style="left:1014px;top:806px" width="26" height="20" viewBox="0 0 26 20"><path d="M2 2 H14 L22 10 L14 18 H2 Z" fill="#fff" stroke="#000" stroke-width="1.2"/><path d="M14 2 V18" stroke="#000" stroke-width="1"/></svg>
<div class="t" style="left:1040px;width:125px;text-align:center;top:806.5px;font-size:17px;line-height:20px;color:#111;">mixed</div>
<div class="a" style="left:1230px;top:780px;width:36px;height:23px;background:#f0f0f0;border-top:1px solid #fff;border-left:1px solid #fff;border-right:2px solid #a0a0a0;border-bottom:2px solid #a0a0a0"></div>
<svg class="a" style="left:1242px;top:783px" width="12" height="16" viewBox="0 0 12 16"><path d="M1 7 L6 1 L11 7Z M1 9 L6 15 L11 9Z" fill="#000"/></svg>
<div class="a" style="left:1266px;top:780px;width:256px;height:23px;background:#f0f0f0;border-top:1px solid #fff;border-left:1px solid #fff;border-right:2px solid #a0a0a0;border-bottom:2px solid #a0a0a0"></div>
<div class="t" style="left:1266px;width:256px;text-align:center;top:782.5px;font-size:17px;line-height:20px;color:#111;">elems to surf comp</div>
<div class="a" style="left:1230px;top:804px;width:36px;height:23px;background:#f0f0f0;border-top:1px solid #fff;border-left:1px solid #fff;border-right:2px solid #a0a0a0;border-bottom:2px solid #a0a0a0"></div>
<svg class="a" style="left:1242px;top:807px" width="12" height="16" viewBox="0 0 12 16"><path d="M1 7 L6 1 L11 7Z M1 9 L6 15 L11 9Z" fill="#000"/></svg>
<div class="a" style="left:1266px;top:804px;width:256px;height:23px;background:#f0f0f0;border-top:1px solid #fff;border-left:1px solid #fff;border-right:2px solid #a0a0a0;border-bottom:2px solid #a0a0a0"></div>
<div class="t" style="left:1266px;width:256px;text-align:center;top:806.5px;font-size:17px;line-height:20px;color:#111;">first order</div>
<div class="a" style="left:1230px;top:828px;width:36px;height:23px;background:#f0f0f0;border-top:1px solid #fff;border-left:1px solid #fff;border-right:2px solid #a0a0a0;border-bottom:2px solid #a0a0a0"></div>
<svg class="a" style="left:1242px;top:835px" width="12" height="8" viewBox="0 0 12 8"><path d="M0 0 H12 L6.0 8Z" fill="#000"/></svg>
<div class="a" style="left:1266px;top:828px;width:256px;height:23px;background:#f0f0f0;border-top:1px solid #fff;border-left:1px solid #fff;border-right:2px solid #a0a0a0;border-bottom:2px solid #a0a0a0"></div>
<div class="t" style="left:1266px;width:256px;text-align:center;top:830.5px;font-size:17px;line-height:20px;color:#111;">keep connectivity</div>
<div class="t" style="left:1231px;top:854px;font-size:17px;line-height:20px;color:#111;">flow:</div>
<div class="t" style="left:1231px;top:878px;font-size:17px;line-height:20px;color:#111;">map:</div>
<div class="a" style="left:1294px;top:854px;width:18px;height:18px;background:#f0f0f0;border-top:2px solid #a0a0a0;border-left:2px solid #a0a0a0;border-right:1px solid #fff;border-bottom:1px solid #fff"></div>
<div class="t" style="left:1323px;top:854px;font-size:17px;line-height:20px;color:#111;">align</div>
<div class="a" style="left:1294px;top:878px;width:18px;height:18px;background:#f0f0f0;border-top:2px solid #a0a0a0;border-left:2px solid #a0a0a0;border-right:1px solid #fff;border-bottom:1px solid #fff"></div>
<svg class="a" style="left:1296px;top:881px" width="14" height="13" viewBox="0 0 14 13"><path d="M2 6 L6 10 L12 2" fill="none" stroke="#000" stroke-width="2"/></svg>
<div class="t" style="left:1322px;top:878px;font-size:17px;line-height:20px;color:#111;">size</div>
<div class="a" style="left:1385px;top:878px;width:18px;height:18px;background:#f0f0f0;border-top:2px solid #a0a0a0;border-left:2px solid #a0a0a0;border-right:1px solid #fff;border-bottom:1px solid #fff"></div>
<svg class="a" style="left:1387px;top:881px" width="14" height="13" viewBox="0 0 14 13"><path d="M2 6 L6 10 L12 2" fill="none" stroke="#000" stroke-width="2"/></svg>
<div class="t" style="left:1414px;top:878px;font-size:17px;line-height:20px;color:#111;">skew</div>
<div class="a" style="left:1240px;top:926px;width:18px;height:18px;background:#f0f0f0;border-top:2px solid #a0a0a0;border-left:2px solid #a0a0a0;border-right:1px solid #fff;border-bottom:1px solid #fff"></div>
<div class="t" style="left:1268px;top:926px;font-size:17px;line-height:20px;color:#111;">link opposite edges with AR &lt;</div>
<div class="a" style="left:1541px;top:924px;width:35px;height:23px;background:#f0f0f0;border-top:1px solid #fff;border-left:1px solid #fff;border-right:2px solid #a0a0a0;border-bottom:2px solid #a0a0a0"></div>
<svg class="a" style="left:1552px;top:927px" width="12" height="16" viewBox="0 0 12 16"><path d="M1 7 L6 1 L11 7Z M1 9 L6 15 L11 9Z" fill="#000"/></svg>
<div class="a" style="left:1576px;top:924px;width:91px;height:23px;background:#f0f0f0;border-top:1px solid #fff;border-left:1px solid #fff;border-right:2px solid #a0a0a0;border-bottom:2px solid #a0a0a0"></div>
<div class="t" style="left:1576px;width:91px;text-align:center;top:926.5px;font-size:17px;line-height:20px;color:#111;">auto</div>
<div class="a" style="left:1705px;top:780px;width:107px;height:23px;background:#5ec05e;border-top:1px solid #a8e8a8;border-left:1px solid #a8e8a8;border-right:2px solid #2a7a2a;border-bottom:2px solid #2a7a2a"></div>
<div class="t" style="left:1705px;width:107px;text-align:center;top:782.5px;font-size:17px;line-height:20px;color:#111;">mesh</div>
<div class="a" style="left:1705px;top:803px;width:107px;height:24px;background:#5ec05e;border-top:1px solid #a8e8a8;border-left:1px solid #a8e8a8;border-right:2px solid #2a7a2a;border-bottom:2px solid #2a7a2a"></div>
<div class="t" style="left:1705px;width:107px;text-align:center;top:805.5px;font-size:17px;line-height:20px;color:#111;">reject</div>
<div class="a" style="left:1687px;top:876px;width:125px;height:23px;background:#5ec05e;border-top:1px solid #a8e8a8;border-left:1px solid #a8e8a8;border-right:2px solid #2a7a2a;border-bottom:2px solid #2a7a2a"></div>
<div class="t" style="left:1687px;width:125px;text-align:center;top:878.5px;font-size:17px;line-height:20px;color:#111;">unmeshed</div>
<div class="a" style="left:1687px;top:899px;width:125px;height:23px;background:#5ec05e;border-top:1px solid #a8e8a8;border-left:1px solid #a8e8a8;border-right:2px solid #2a7a2a;border-bottom:2px solid #2a7a2a"></div>
<div class="t" style="left:1687px;width:125px;text-align:center;top:901.5px;font-size:17px;line-height:20px;color:#111;">failed</div>
<div class="a" style="left:1705px;top:924px;width:107px;height:23px;background:#c86464;border:2px solid #3a1010;border-right-width:2px"></div>
<div class="t" style="left:1705px;width:107px;text-align:center;top:926.5px;font-size:17px;line-height:20px;color:#111;">return</div>
<div class="t" style="left:1722px;top:929px;font-size:15px;line-height:18px;color:rgba(255,255,255,0.6);letter-spacing:-0.6px">CSDN @酸橘纸</div>
<div class="a" style="left:534.0px;top:87px;width:2px;height:2px;background:#222"></div>
<div class="a" style="left:538.5px;top:87px;width:2px;height:2px;background:#222"></div>
<div class="a" style="left:543.0px;top:87px;width:2px;height:2px;background:#222"></div>
<div class="a" style="left:547.5px;top:87px;width:2px;height:2px;background:#222"></div>
<svg class="a" style="left:529px;top:103px" width="24" height="24" viewBox="0 0 24 24"><path d="M6 6 q7-2 14-6 v12 q-7 4 -14 6z" fill="#4a4aa0"/><path d="M6 10 q7-2 14-6 M6 14 q7-2 14-6 M10 5 v13 M14 3.5 v13 M17 2 v13" stroke="#c8c8f0" stroke-width=".6" fill="none"/><rect x="3" y="11" width="9" height="9" fill="#fff" stroke="#e03020" stroke-width="1.3"/></svg>
<svg class="a" style="left:529px;top:123px" width="24" height="24" viewBox="0 0 24 24"><path d="M6 6 q7-2 14-6 v12 q-7 4 -14 6z" fill="#4a4aa0"/><path d="M6 10 q7-2 14-6 M6 14 q7-2 14-6 M10 5 v13 M14 3.5 v13 M17 2 v13" stroke="#c8c8f0" stroke-width=".6" fill="none"/><path d="M12 20 q5 2 8-4 l-1 5 -6 1z" fill="#e02020"/></svg>
<svg class="a" style="left:529px;top:148px" width="24" height="24" viewBox="0 0 24 24"><path d="M6 6 q7-2 14-6 v12 q-7 4 -14 6z" fill="#4a4aa0"/><path d="M6 10 q7-2 14-6 M6 14 q7-2 14-6 M10 5 v13 M14 3.5 v13 M17 2 v13" stroke="#c8c8f0" stroke-width=".6" fill="none"/><path d="M6 14 h8 v5 h-8z" fill="#fff" stroke="#ccc" stroke-width=".5"/></svg>
<svg class="a" style="left:529px;top:177px" width="24" height="24" viewBox="0 0 24 24"><path d="M6 6 q7-2 14-6 v12 q-7 4 -14 6z" fill="#4a4aa0"/><path d="M6 10 q7-2 14-6 M6 14 q7-2 14-6 M10 5 v13 M14 3.5 v13 M17 2 v13" stroke="#c8c8f0" stroke-width=".6" fill="none"/></svg>
<svg class="a" style="left:529px;top:205px" width="24" height="24" viewBox="0 0 24 24"><path d="M6 6 q7-2 14-6 v12 q-7 4 -14 6z" fill="#4a4aa0"/><path d="M6 10 q7-2 14-6 M6 14 q7-2 14-6 M10 5 v13 M14 3.5 v13 M17 2 v13" stroke="#c8c8f0" stroke-width=".6" fill="none"/><rect x="3" y="9" width="10" height="10" fill="none" stroke="#e03020" stroke-width="1.3"/></svg>
<svg class="a" style="left:529px;top:231px" width="24" height="24" viewBox="0 0 24 24"><path d="M6 6 q7-2 14-6 v12 q-7 4 -14 6z" fill="#4a4aa0"/><path d="M6 10 q7-2 14-6 M6 14 q7-2 14-6 M10 5 v13 M14 3.5 v13 M17 2 v13" stroke="#c8c8f0" stroke-width=".6" fill="none"/><circle cx="12" cy="11" r="9" fill="none" stroke="#e03020" stroke-width="1.3"/></svg>
<svg class="a" style="left:529px;top:258px" width="24" height="22" viewBox="0 0 24 22"><circle cx="7" cy="13" r="5" fill="#5a6ab8" stroke="#223"/><circle cx="17" cy="13" r="5" fill="#5a6ab8" stroke="#223"/><path d="M5 6 h4 l2 5 M15 6 h4 l-2 5" stroke="#223" stroke-width="2" fill="none"/></svg>
<svg class="a" style="left:529px;top:285px" width="24" height="24" viewBox="0 0 24 24"><circle cx="8" cy="6" r="4.5" fill="#2a3ab0"/><text x="7" y="9" font-size="7" font-weight="bold" fill="#fff">i</text><text x="3" y="21" font-size="8.5" font-weight="bold" fill="#333" font-family="Liberation Sans">123</text></svg>
<svg class="a" style="left:529px;top:310px" width="26" height="22" viewBox="0 0 26 22"><text x="2" y="8" font-size="7" fill="#222">0</text><text x="19" y="8" font-size="7" fill="#222">1</text><path d="M4 19 L21 12 M4 12 v8 M21 6 v8" stroke="#3a3a90" stroke-width="1.6"/><text x="12" y="21" font-size="6" fill="#222">*10</text></svg>
<svg class="a" style="left:529px;top:338px" width="26" height="24" viewBox="0 0 26 24"><path d="M3 3 q4 0 8-2 v6 q-4 2 -8 2z" fill="#5a5ab0"/><text x="2" y="20" font-size="8.5" font-weight="bold" fill="#333" font-family="Liberation Sans">ABC</text></svg>
<svg class="a" style="left:529px;top:364px" width="26" height="24" viewBox="0 0 26 24"><path d="M5 1 v8" stroke="#e00" stroke-width="1.6"/><path d="M2 7 l3 4 3-4z" fill="#e00"/><circle cx="5" cy="12" r="1.6" fill="#000"/><text x="2" y="22" font-size="8.5" font-weight="bold" fill="#333" font-family="Liberation Sans">ABC</text></svg>
<svg class="a" style="left:529px;top:390px" width="26" height="26" viewBox="0 0 26 26"><path d="M3 7 l9-2 v6 l-9 2z" fill="#8a8ad0" stroke="#445" stroke-width=".5"/><path d="M11 13 l9-2 v6 l-9 2z" fill="#8a8ad0" stroke="#445" stroke-width=".5"/><path d="M6 1 v5" stroke="#e00" stroke-width="1.5"/><path d="M19 19 v5" stroke="#e00" stroke-width="1.5"/><path d="M15 4 a3 3 0 1 1 5 2" stroke="#888" fill="none"/></svg>
<svg class="a" style="left:529px;top:417px" width="26" height="24" viewBox="0 0 26 24"><path d="M5 7 L19 4 L19 17 L5 20 Z" fill="#5a9ae8" stroke="#223"/><circle cx="5" cy="7" r="1.8" fill="#fff" stroke="#000" stroke-width=".7"/><circle cx="19" cy="4" r="1.8" fill="#fff" stroke="#000" stroke-width=".7"/><circle cx="19" cy="17" r="1.8" fill="#fff" stroke="#000" stroke-width=".7"/></svg>
<svg class="a" style="left:568px;top:600px" width="120" height="131" viewBox="0 0 120 131"><path d="M27 80 L13.4 36.3" stroke="#3030ff" stroke-width="1.3"/><path d="M13.4 36.3 L11 50 L17 50 Z" fill="none" stroke="#3030ff" stroke-width="1.2"/><path d="M11 50 L14 54 L17 50" fill="none" stroke="#3030ff"/>
<path d="M27 80 L82 64.5" stroke="#20e020" stroke-width="1.3"/><path d="M82 64.5 L68 66 L70 72 Z" fill="none" stroke="#20e020" stroke-width="1.2"/>
<path d="M27 80 L35.3 113.5" stroke="#ff2020" stroke-width="1.3"/><path d="M35.3 113.5 L32 100 L38 100 Z" fill="none" stroke="#ff2020" stroke-width="1.2"/></svg>
<div class="t" style="left:578px;top:612px;font-size:15px;line-height:18px;color:#fff">Z</div>
<div class="t" style="left:660px;top:645px;font-size:15px;line-height:18px;color:#fff">Y</div>
<div class="t" style="left:604px;top:705px;font-size:15px;line-height:18px;color:#fff">X</div>
<div class="t" style="left:1116px;top:714px;font-size:11px;line-height:13px;color:#444;font-weight:bold">40</div>
<svg class="a" style="left:1131px;top:719px" width="124" height="10" viewBox="0 0 124 10"><path d="M2 2 V8 H121 V2" fill="none" stroke="#444" stroke-width="1.5"/></svg>
<div class="a" style="left:1140px;top:47px;width:157px;height:301px;background:rgba(0,0,0,0.18);filter:blur(1.5px)"></div>
<div class="a" style="left:1138px;top:44px;width:157px;height:302px;background:#f0f0f0;border:1px solid #a0a0a0"></div>
<div class="t" style="left:1161px;top:50.0px;font-size:13px;line-height:16px;color:#3a3a3a">Assembly</div>
<svg class="a" style="left:1279px;top:51px" width="7" height="11" viewBox="0 0 7 11"><path d="M1 0.5 L6 5.5 L1 10.5Z" fill="#000"/></svg>
<div class="t" style="left:1161px;top:71.1px;font-size:13px;line-height:16px;color:#3a3a3a">Panel</div>
<svg class="a" style="left:1279px;top:72px" width="7" height="11" viewBox="0 0 7 11"><path d="M1 0.5 L6 5.5 L1 10.5Z" fill="#000"/></svg>
<div class="t" style="left:1161px;top:92.2px;font-size:13px;line-height:16px;color:#3a3a3a">Beams</div>
<svg class="a" style="left:1279px;top:93px" width="7" height="11" viewBox="0 0 7 11"><path d="M1 0.5 L6 5.5 L1 10.5Z" fill="#000"/></svg>
<div class="t" style="left:1161px;top:113.3px;font-size:13px;line-height:16px;color:#3a3a3a">Check</div>
<svg class="a" style="left:1279px;top:114px" width="7" height="11" viewBox="0 0 7 11"><path d="M1 0.5 L6 5.5 L1 10.5Z" fill="#000"/></svg>
<div class="t" style="left:1161px;top:134.4px;font-size:13px;line-height:16px;color:#3a3a3a">Composites</div>
<svg class="a" style="left:1279px;top:135px" width="7" height="11" viewBox="0 0 7 11"><path d="M1 0.5 L6 5.5 L1 10.5Z" fill="#000"/></svg>
<div class="t" style="left:1161px;top:155.5px;font-size:13px;line-height:16px;color:#3a3a3a">Loads/BCs</div>
<svg class="a" style="left:1279px;top:157px" width="7" height="11" viewBox="0 0 7 11"><path d="M1 0.5 L6 5.5 L1 10.5Z" fill="#000"/></svg>
<div class="t" style="left:1161px;top:176.6px;font-size:13px;line-height:16px;color:#3a3a3a">Connections</div>
<svg class="a" style="left:1279px;top:178px" width="7" height="11" viewBox="0 0 7 11"><path d="M1 0.5 L6 5.5 L1 10.5Z" fill="#000"/></svg>
<div class="t" style="left:1161px;top:197.7px;font-size:13px;line-height:16px;color:#3a3a3a">Spatial ID Manager</div>
<svg class="a" style="left:1279px;top:199px" width="7" height="11" viewBox="0 0 7 11"><path d="M1 0.5 L6 5.5 L1 10.5Z" fill="#000"/></svg>
<div class="t" style="left:1161px;top:218.8px;font-size:13px;line-height:16px;color:#3a3a3a">Display</div>
<svg class="a" style="left:1279px;top:220px" width="7" height="11" viewBox="0 0 7 11"><path d="M1 0.5 L6 5.5 L1 10.5Z" fill="#000"/></svg>
<div class="a" style="left:1141px;top:236.9px;width:148px;height:21px;background:#ffc994"></div>
<div class="t" style="left:1161px;top:239.9px;font-size:13px;line-height:16px;color:#3a3a3a">Results</div>
<svg class="a" style="left:1279px;top:241px" width="7" height="11" viewBox="0 0 7 11"><path d="M1 0.5 L6 5.5 L1 10.5Z" fill="#000"/></svg>
<div class="t" style="left:1161px;top:261.0px;font-size:13px;line-height:16px;color:#3a3a3a">Certification</div>
<svg class="a" style="left:1279px;top:262px" width="7" height="11" viewBox="0 0 7 11"><path d="M1 0.5 L6 5.5 L1 10.5Z" fill="#000"/></svg>
<div class="t" style="left:1161px;top:282.1px;font-size:13px;line-height:16px;color:#3a3a3a">Sets</div>
<svg class="a" style="left:1279px;top:283px" width="7" height="11" viewBox="0 0 7 11"><path d="M1 0.5 L6 5.5 L1 10.5Z" fill="#000"/></svg>
<div class="t" style="left:1161px;top:303.2px;font-size:13px;line-height:16px;color:#3a3a3a">Systems</div>
<svg class="a" style="left:1279px;top:304px" width="7" height="11" viewBox="0 0 7 11"><path d="M1 0.5 L6 5.5 L1 10.5Z" fill="#000"/></svg>
<div class="t" style="left:1161px;top:324.3px;font-size:13px;line-height:16px;color:#3a3a3a">Nodes</div>
<svg class="a" style="left:1279px;top:325px" width="7" height="11" viewBox="0 0 7 11"><path d="M1 0.5 L6 5.5 L1 10.5Z" fill="#000"/></svg>
<div class="a" style="left:1291px;top:237px;width:141px;height:47px;background:rgba(0,0,0,0.18);filter:blur(1.5px)"></div>
<div class="a" style="left:1289px;top:235px;width:140px;height:46px;background:#f0f0f0;border:1px solid #a0a0a0"></div>
<div class="a" style="left:1292px;top:237px;width:135px;height:21px;background:#ffc994"></div>
<div class="t" style="left:1312px;top:241px;font-size:13px;line-height:16px;color:#2a2a2a">Matrix Browser</div>
<div class="t" style="left:1312px;top:262px;font-size:13px;line-height:16px;color:#3a3a3a">Results Explorer</div>
<svg class="a" style="left:0;top:0" width="1838" height="959"><path d="M782.1 487.3 L403.0 413.4 L409.0 408.4 L387.5 414.6 L405.3 428.1 L401.5 421.3 L781.9 488.7 Z" fill="#ff1a1a"/><path d="M1660.3 344.3 L1431.4 250.2 L1438.3 246.5 L1416.0 248.4 L1430.9 265.1 L1428.5 257.6 L1659.7 345.7 Z" fill="#ff1a1a"/><path d="M1589.4 755.5 L1725.8 926.6 L1718.4 926.2 L1738.0 936.0 L1732.3 914.8 L1731.2 922.2 L1590.6 754.5 Z" fill="#ff1a1a"/></svg>
<div class="t" style="left:760px;top:510px;font-size:34px;line-height:38px;color:#ff1a1a">3</div>
<div class="t" style="left:1686px;top:337px;font-size:34px;line-height:38px;color:#ff1a1a">2</div>
<div class="t" style="left:1562px;top:728px;font-size:34px;line-height:38px;color:#ff1a1a">1</div></body></html>
